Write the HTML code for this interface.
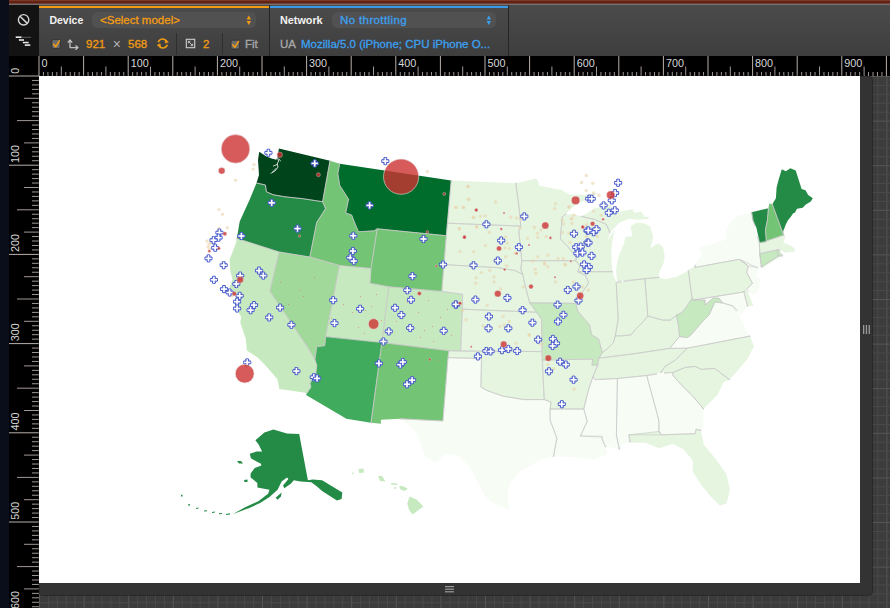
<!DOCTYPE html>
<html><head><meta charset="utf-8">
<style>
html,body{margin:0;padding:0;width:890px;height:608px;overflow:hidden;background:#3c3c3c;}
body{position:relative;font-family:"Liberation Sans",sans-serif;}
.abs{position:absolute;}
#topstrip{left:0;top:0;width:890px;height:5px;background:linear-gradient(#8a5040 0px,#6a2414 1px,#5e1e10 3px,#7a6a66 4px,#777 5px);}
#navy{left:0;top:0;width:9px;height:608px;background:#0a0e1a;}
#tbleft{left:9px;top:5px;width:30px;height:51px;background:#131313;}
#toolbar{left:39px;top:5px;width:851px;height:51px;background:linear-gradient(#4b4b4b,#3e3e3e);}
.sec{position:absolute;top:0;height:51px;border-right:1.5px solid #262626;}
.bar{position:absolute;left:0;right:0;top:1px;height:2px;}
.lbl{position:absolute;font-size:10.8px;line-height:14px;font-weight:bold;color:#f2f2f2;}
.sel{position:absolute;height:16px;border-radius:5px;background:#515151;}
.orange{color:#f39c12;}
.blue{color:#3ca0f0;}
.t12{position:absolute;font-size:11.5px;line-height:14px;-webkit-text-stroke:0.3px currentColor;}
.sep{position:absolute;width:1px;background:#2e2e2e;}
.cb{position:absolute;width:8px;height:8px;border:1px solid #2a2a2a;border-radius:2px;background:#6a6a6a;}
</style></head><body>
<div id="navy" class="abs"></div>
<div id="topstrip" class="abs" style="left:9px;width:881px"></div>
<div id="tbleft" class="abs"></div>
<div id="toolbar" class="abs">
  <div class="sec" style="left:0;width:230px"><div class="bar" style="background:#f39c12"></div></div>
  <div class="sec" style="left:231px;width:238px"><div class="bar" style="background:#3a9ae8"></div></div>
</div>
<svg class="abs" style="left:0;top:0;z-index:5" width="890" height="60">
  <circle cx="23.6" cy="19.8" r="5.2" fill="none" stroke="#d6d6d6" stroke-width="1.4"/>
  <line x1="20" y1="16.2" x2="27.2" y2="23.4" stroke="#d6d6d6" stroke-width="1.5"/>
  <rect x="15.7" y="36.4" width="5.9" height="1.6" fill="#e8e8e8"/><rect x="21.6" y="36.8" width="9.5" height="1" fill="#5a5a5a"/>
  <rect x="18.9" y="39.2" width="5.1" height="1.6" fill="#e8e8e8"/>
  <rect x="22.8" y="41.8" width="5.9" height="1.5" fill="#e8e8e8"/>
  <rect x="24.8" y="44.3" width="5.5" height="1.6" fill="#e8e8e8"/>
  <!-- select arrows -->
  <path d="M246.6,19.5 L248.8,15.6 L251,19.5Z M246.6,20.9 L248.8,25 L251,20.9Z" fill="#f39c12"/>
  <path d="M486.6,19.5 L488.8,15.6 L491,19.5Z M486.6,20.9 L488.8,25 L491,20.9Z" fill="#3ca0f0"/>
  <!-- checkboxes -->
  <rect x="51.8" y="39.6" width="8.4" height="9" rx="1.6" fill="#6b6b6b" stroke="#2c2c2c" stroke-width="0.8"/>
  <path d="M53.6,44.2 L55.6,46.8 L59.4,40.8" fill="none" stroke="#f39c12" stroke-width="1.5" stroke-linecap="round" stroke-linejoin="round"/>
  <rect x="231" y="40.2" width="8.4" height="8.8" rx="1.6" fill="#6b6b6b" stroke="#2c2c2c" stroke-width="0.8"/>
  <path d="M232.8,44.8 L234.8,47.4 L238.6,41.4" fill="none" stroke="#f39c12" stroke-width="1.5" stroke-linecap="round" stroke-linejoin="round"/>
  <!-- resize arrows icon -->
  <path d="M70,48 V40.5 M67.8,42.6 L70,40 L72.2,42.6 M70,47.6 H77.6 M75.5,45.4 L78,47.6 L75.5,49.8" fill="none" stroke="#bdbdbd" stroke-width="1.3" stroke-linejoin="round"/>
  <!-- rotate icon -->
  <path d="M158.3,42.2 A4.6,4.6 0 0 1 166.6,41.2 M167.3,44.8 A4.6,4.6 0 0 1 159,45.8" fill="none" stroke="#f39c12" stroke-width="1.6"/>
  <path d="M165,39.6 L168.4,41.9 L165.4,43.2Z M160.6,47.4 L157.2,45.1 L160.2,43.8Z" fill="#f39c12" stroke="#f39c12" stroke-width="0.6"/>
  <!-- zoom icon -->
  <rect x="186.3" y="39.3" width="8.4" height="8.4" fill="none" stroke="#cfcfcf" stroke-width="1.1"/>
  <path d="M188.6,41.6 L191,44 M188.3,43.4 V41.3 H190.4 M192.4,45.4 L190,43 M192.7,43.6 V45.7 H190.6" fill="none" stroke="#cfcfcf" stroke-width="0.9"/>
</svg>
<div class="sel" style="left:92.2px;top:12px;width:164.2px"></div>
<div class="sel" style="left:332.4px;top:12px;width:164px"></div>
<div id="tDevice" class="lbl" style="left:49.4px;top:13px;font-size:10.5px">Device</div>
<div id="tSel" class="t12 orange" style="left:100px;top:13px">&lt;Select model&gt;</div>
<div id="tNet" class="lbl" style="left:280px;top:13px">Network</div>
<div id="tNo" class="t12 blue" style="left:340px;top:13px;letter-spacing:0.38px">No throttling</div>
<div id="t921" class="t12 orange" style="left:86px;top:37px">921</div>
<div id="tX" class="t12" style="left:112.8px;top:36.5px;color:#b0b0b0;font-size:14px;-webkit-text-stroke:0">&#215;</div>
<div id="t568" class="t12 orange" style="left:128px;top:37px">568</div>
<div class="sep" style="left:176px;top:33px;height:22px"></div>
<div id="t2" class="t12 orange" style="left:203px;top:37px">2</div>
<div class="sep" style="left:222px;top:33px;height:22px"></div>
<div id="tFit" class="t12" style="left:245px;top:37px;color:#aaa">Fit</div>
<div id="tUA" class="t12" style="left:280px;top:37px;color:#aaa">UA</div>
<div id="tMoz" class="t12 blue" style="left:301px;top:37px">Mozilla/5.0 (iPhone; CPU iPhone O...</div>
<svg class="abs" style="left:0;top:0" width="890" height="608">
  <rect x="9" y="56" width="881" height="20" fill="#000"/>
  <rect x="9" y="56" width="30" height="552" fill="#000"/>
  <line x1="39.00" y1="56" x2="39.00" y2="76" stroke="#b8b0ac" stroke-width="1"/>
<text x="41.50" y="67" fill="#d8d8d8" font-size="10.8" font-family="Liberation Sans">0</text>
<line x1="43.46" y1="72" x2="43.46" y2="76" stroke="#a09894" stroke-width="1"/>
<line x1="47.92" y1="72" x2="47.92" y2="76" stroke="#a09894" stroke-width="1"/>
<line x1="52.38" y1="72" x2="52.38" y2="76" stroke="#a09894" stroke-width="1"/>
<line x1="56.84" y1="72" x2="56.84" y2="76" stroke="#a09894" stroke-width="1"/>
<line x1="61.30" y1="66.5" x2="61.30" y2="76" stroke="#a09894" stroke-width="1"/>
<line x1="65.76" y1="72" x2="65.76" y2="76" stroke="#a09894" stroke-width="1"/>
<line x1="70.22" y1="72" x2="70.22" y2="76" stroke="#a09894" stroke-width="1"/>
<line x1="74.68" y1="72" x2="74.68" y2="76" stroke="#a09894" stroke-width="1"/>
<line x1="79.14" y1="72" x2="79.14" y2="76" stroke="#a09894" stroke-width="1"/>
<line x1="83.60" y1="56" x2="83.60" y2="76" stroke="#b8b0ac" stroke-width="1"/>
<line x1="88.06" y1="72" x2="88.06" y2="76" stroke="#a09894" stroke-width="1"/>
<line x1="92.52" y1="72" x2="92.52" y2="76" stroke="#a09894" stroke-width="1"/>
<line x1="96.98" y1="72" x2="96.98" y2="76" stroke="#a09894" stroke-width="1"/>
<line x1="101.44" y1="72" x2="101.44" y2="76" stroke="#a09894" stroke-width="1"/>
<line x1="105.90" y1="66.5" x2="105.90" y2="76" stroke="#a09894" stroke-width="1"/>
<line x1="110.36" y1="72" x2="110.36" y2="76" stroke="#a09894" stroke-width="1"/>
<line x1="114.82" y1="72" x2="114.82" y2="76" stroke="#a09894" stroke-width="1"/>
<line x1="119.28" y1="72" x2="119.28" y2="76" stroke="#a09894" stroke-width="1"/>
<line x1="123.74" y1="72" x2="123.74" y2="76" stroke="#a09894" stroke-width="1"/>
<line x1="128.20" y1="56" x2="128.20" y2="76" stroke="#b8b0ac" stroke-width="1"/>
<text x="130.70" y="67" fill="#d8d8d8" font-size="10.8" font-family="Liberation Sans">100</text>
<line x1="132.66" y1="72" x2="132.66" y2="76" stroke="#a09894" stroke-width="1"/>
<line x1="137.12" y1="72" x2="137.12" y2="76" stroke="#a09894" stroke-width="1"/>
<line x1="141.58" y1="72" x2="141.58" y2="76" stroke="#a09894" stroke-width="1"/>
<line x1="146.04" y1="72" x2="146.04" y2="76" stroke="#a09894" stroke-width="1"/>
<line x1="150.50" y1="66.5" x2="150.50" y2="76" stroke="#a09894" stroke-width="1"/>
<line x1="154.96" y1="72" x2="154.96" y2="76" stroke="#a09894" stroke-width="1"/>
<line x1="159.42" y1="72" x2="159.42" y2="76" stroke="#a09894" stroke-width="1"/>
<line x1="163.88" y1="72" x2="163.88" y2="76" stroke="#a09894" stroke-width="1"/>
<line x1="168.34" y1="72" x2="168.34" y2="76" stroke="#a09894" stroke-width="1"/>
<line x1="172.80" y1="56" x2="172.80" y2="76" stroke="#b8b0ac" stroke-width="1"/>
<line x1="177.26" y1="72" x2="177.26" y2="76" stroke="#a09894" stroke-width="1"/>
<line x1="181.72" y1="72" x2="181.72" y2="76" stroke="#a09894" stroke-width="1"/>
<line x1="186.18" y1="72" x2="186.18" y2="76" stroke="#a09894" stroke-width="1"/>
<line x1="190.64" y1="72" x2="190.64" y2="76" stroke="#a09894" stroke-width="1"/>
<line x1="195.10" y1="66.5" x2="195.10" y2="76" stroke="#a09894" stroke-width="1"/>
<line x1="199.56" y1="72" x2="199.56" y2="76" stroke="#a09894" stroke-width="1"/>
<line x1="204.02" y1="72" x2="204.02" y2="76" stroke="#a09894" stroke-width="1"/>
<line x1="208.48" y1="72" x2="208.48" y2="76" stroke="#a09894" stroke-width="1"/>
<line x1="212.94" y1="72" x2="212.94" y2="76" stroke="#a09894" stroke-width="1"/>
<line x1="217.40" y1="56" x2="217.40" y2="76" stroke="#b8b0ac" stroke-width="1"/>
<text x="219.90" y="67" fill="#d8d8d8" font-size="10.8" font-family="Liberation Sans">200</text>
<line x1="221.86" y1="72" x2="221.86" y2="76" stroke="#a09894" stroke-width="1"/>
<line x1="226.32" y1="72" x2="226.32" y2="76" stroke="#a09894" stroke-width="1"/>
<line x1="230.78" y1="72" x2="230.78" y2="76" stroke="#a09894" stroke-width="1"/>
<line x1="235.24" y1="72" x2="235.24" y2="76" stroke="#a09894" stroke-width="1"/>
<line x1="239.70" y1="66.5" x2="239.70" y2="76" stroke="#a09894" stroke-width="1"/>
<line x1="244.16" y1="72" x2="244.16" y2="76" stroke="#a09894" stroke-width="1"/>
<line x1="248.62" y1="72" x2="248.62" y2="76" stroke="#a09894" stroke-width="1"/>
<line x1="253.08" y1="72" x2="253.08" y2="76" stroke="#a09894" stroke-width="1"/>
<line x1="257.54" y1="72" x2="257.54" y2="76" stroke="#a09894" stroke-width="1"/>
<line x1="262.00" y1="56" x2="262.00" y2="76" stroke="#b8b0ac" stroke-width="1"/>
<line x1="266.46" y1="72" x2="266.46" y2="76" stroke="#a09894" stroke-width="1"/>
<line x1="270.92" y1="72" x2="270.92" y2="76" stroke="#a09894" stroke-width="1"/>
<line x1="275.38" y1="72" x2="275.38" y2="76" stroke="#a09894" stroke-width="1"/>
<line x1="279.84" y1="72" x2="279.84" y2="76" stroke="#a09894" stroke-width="1"/>
<line x1="284.30" y1="66.5" x2="284.30" y2="76" stroke="#a09894" stroke-width="1"/>
<line x1="288.76" y1="72" x2="288.76" y2="76" stroke="#a09894" stroke-width="1"/>
<line x1="293.22" y1="72" x2="293.22" y2="76" stroke="#a09894" stroke-width="1"/>
<line x1="297.68" y1="72" x2="297.68" y2="76" stroke="#a09894" stroke-width="1"/>
<line x1="302.14" y1="72" x2="302.14" y2="76" stroke="#a09894" stroke-width="1"/>
<line x1="306.60" y1="56" x2="306.60" y2="76" stroke="#b8b0ac" stroke-width="1"/>
<text x="309.10" y="67" fill="#d8d8d8" font-size="10.8" font-family="Liberation Sans">300</text>
<line x1="311.06" y1="72" x2="311.06" y2="76" stroke="#a09894" stroke-width="1"/>
<line x1="315.52" y1="72" x2="315.52" y2="76" stroke="#a09894" stroke-width="1"/>
<line x1="319.98" y1="72" x2="319.98" y2="76" stroke="#a09894" stroke-width="1"/>
<line x1="324.44" y1="72" x2="324.44" y2="76" stroke="#a09894" stroke-width="1"/>
<line x1="328.90" y1="66.5" x2="328.90" y2="76" stroke="#a09894" stroke-width="1"/>
<line x1="333.36" y1="72" x2="333.36" y2="76" stroke="#a09894" stroke-width="1"/>
<line x1="337.82" y1="72" x2="337.82" y2="76" stroke="#a09894" stroke-width="1"/>
<line x1="342.28" y1="72" x2="342.28" y2="76" stroke="#a09894" stroke-width="1"/>
<line x1="346.74" y1="72" x2="346.74" y2="76" stroke="#a09894" stroke-width="1"/>
<line x1="351.20" y1="56" x2="351.20" y2="76" stroke="#b8b0ac" stroke-width="1"/>
<line x1="355.66" y1="72" x2="355.66" y2="76" stroke="#a09894" stroke-width="1"/>
<line x1="360.12" y1="72" x2="360.12" y2="76" stroke="#a09894" stroke-width="1"/>
<line x1="364.58" y1="72" x2="364.58" y2="76" stroke="#a09894" stroke-width="1"/>
<line x1="369.04" y1="72" x2="369.04" y2="76" stroke="#a09894" stroke-width="1"/>
<line x1="373.50" y1="66.5" x2="373.50" y2="76" stroke="#a09894" stroke-width="1"/>
<line x1="377.96" y1="72" x2="377.96" y2="76" stroke="#a09894" stroke-width="1"/>
<line x1="382.42" y1="72" x2="382.42" y2="76" stroke="#a09894" stroke-width="1"/>
<line x1="386.88" y1="72" x2="386.88" y2="76" stroke="#a09894" stroke-width="1"/>
<line x1="391.34" y1="72" x2="391.34" y2="76" stroke="#a09894" stroke-width="1"/>
<line x1="395.80" y1="56" x2="395.80" y2="76" stroke="#b8b0ac" stroke-width="1"/>
<text x="398.30" y="67" fill="#d8d8d8" font-size="10.8" font-family="Liberation Sans">400</text>
<line x1="400.26" y1="72" x2="400.26" y2="76" stroke="#a09894" stroke-width="1"/>
<line x1="404.72" y1="72" x2="404.72" y2="76" stroke="#a09894" stroke-width="1"/>
<line x1="409.18" y1="72" x2="409.18" y2="76" stroke="#a09894" stroke-width="1"/>
<line x1="413.64" y1="72" x2="413.64" y2="76" stroke="#a09894" stroke-width="1"/>
<line x1="418.10" y1="66.5" x2="418.10" y2="76" stroke="#a09894" stroke-width="1"/>
<line x1="422.56" y1="72" x2="422.56" y2="76" stroke="#a09894" stroke-width="1"/>
<line x1="427.02" y1="72" x2="427.02" y2="76" stroke="#a09894" stroke-width="1"/>
<line x1="431.48" y1="72" x2="431.48" y2="76" stroke="#a09894" stroke-width="1"/>
<line x1="435.94" y1="72" x2="435.94" y2="76" stroke="#a09894" stroke-width="1"/>
<line x1="440.40" y1="56" x2="440.40" y2="76" stroke="#b8b0ac" stroke-width="1"/>
<line x1="444.86" y1="72" x2="444.86" y2="76" stroke="#a09894" stroke-width="1"/>
<line x1="449.32" y1="72" x2="449.32" y2="76" stroke="#a09894" stroke-width="1"/>
<line x1="453.78" y1="72" x2="453.78" y2="76" stroke="#a09894" stroke-width="1"/>
<line x1="458.24" y1="72" x2="458.24" y2="76" stroke="#a09894" stroke-width="1"/>
<line x1="462.70" y1="66.5" x2="462.70" y2="76" stroke="#a09894" stroke-width="1"/>
<line x1="467.16" y1="72" x2="467.16" y2="76" stroke="#a09894" stroke-width="1"/>
<line x1="471.62" y1="72" x2="471.62" y2="76" stroke="#a09894" stroke-width="1"/>
<line x1="476.08" y1="72" x2="476.08" y2="76" stroke="#a09894" stroke-width="1"/>
<line x1="480.54" y1="72" x2="480.54" y2="76" stroke="#a09894" stroke-width="1"/>
<line x1="485.00" y1="56" x2="485.00" y2="76" stroke="#b8b0ac" stroke-width="1"/>
<text x="487.50" y="67" fill="#d8d8d8" font-size="10.8" font-family="Liberation Sans">500</text>
<line x1="489.46" y1="72" x2="489.46" y2="76" stroke="#a09894" stroke-width="1"/>
<line x1="493.92" y1="72" x2="493.92" y2="76" stroke="#a09894" stroke-width="1"/>
<line x1="498.38" y1="72" x2="498.38" y2="76" stroke="#a09894" stroke-width="1"/>
<line x1="502.84" y1="72" x2="502.84" y2="76" stroke="#a09894" stroke-width="1"/>
<line x1="507.30" y1="66.5" x2="507.30" y2="76" stroke="#a09894" stroke-width="1"/>
<line x1="511.76" y1="72" x2="511.76" y2="76" stroke="#a09894" stroke-width="1"/>
<line x1="516.22" y1="72" x2="516.22" y2="76" stroke="#a09894" stroke-width="1"/>
<line x1="520.68" y1="72" x2="520.68" y2="76" stroke="#a09894" stroke-width="1"/>
<line x1="525.14" y1="72" x2="525.14" y2="76" stroke="#a09894" stroke-width="1"/>
<line x1="529.60" y1="56" x2="529.60" y2="76" stroke="#b8b0ac" stroke-width="1"/>
<line x1="534.06" y1="72" x2="534.06" y2="76" stroke="#a09894" stroke-width="1"/>
<line x1="538.52" y1="72" x2="538.52" y2="76" stroke="#a09894" stroke-width="1"/>
<line x1="542.98" y1="72" x2="542.98" y2="76" stroke="#a09894" stroke-width="1"/>
<line x1="547.44" y1="72" x2="547.44" y2="76" stroke="#a09894" stroke-width="1"/>
<line x1="551.90" y1="66.5" x2="551.90" y2="76" stroke="#a09894" stroke-width="1"/>
<line x1="556.36" y1="72" x2="556.36" y2="76" stroke="#a09894" stroke-width="1"/>
<line x1="560.82" y1="72" x2="560.82" y2="76" stroke="#a09894" stroke-width="1"/>
<line x1="565.28" y1="72" x2="565.28" y2="76" stroke="#a09894" stroke-width="1"/>
<line x1="569.74" y1="72" x2="569.74" y2="76" stroke="#a09894" stroke-width="1"/>
<line x1="574.20" y1="56" x2="574.20" y2="76" stroke="#b8b0ac" stroke-width="1"/>
<text x="576.70" y="67" fill="#d8d8d8" font-size="10.8" font-family="Liberation Sans">600</text>
<line x1="578.66" y1="72" x2="578.66" y2="76" stroke="#a09894" stroke-width="1"/>
<line x1="583.12" y1="72" x2="583.12" y2="76" stroke="#a09894" stroke-width="1"/>
<line x1="587.58" y1="72" x2="587.58" y2="76" stroke="#a09894" stroke-width="1"/>
<line x1="592.04" y1="72" x2="592.04" y2="76" stroke="#a09894" stroke-width="1"/>
<line x1="596.50" y1="66.5" x2="596.50" y2="76" stroke="#a09894" stroke-width="1"/>
<line x1="600.96" y1="72" x2="600.96" y2="76" stroke="#a09894" stroke-width="1"/>
<line x1="605.42" y1="72" x2="605.42" y2="76" stroke="#a09894" stroke-width="1"/>
<line x1="609.88" y1="72" x2="609.88" y2="76" stroke="#a09894" stroke-width="1"/>
<line x1="614.34" y1="72" x2="614.34" y2="76" stroke="#a09894" stroke-width="1"/>
<line x1="618.80" y1="56" x2="618.80" y2="76" stroke="#b8b0ac" stroke-width="1"/>
<line x1="623.26" y1="72" x2="623.26" y2="76" stroke="#a09894" stroke-width="1"/>
<line x1="627.72" y1="72" x2="627.72" y2="76" stroke="#a09894" stroke-width="1"/>
<line x1="632.18" y1="72" x2="632.18" y2="76" stroke="#a09894" stroke-width="1"/>
<line x1="636.64" y1="72" x2="636.64" y2="76" stroke="#a09894" stroke-width="1"/>
<line x1="641.10" y1="66.5" x2="641.10" y2="76" stroke="#a09894" stroke-width="1"/>
<line x1="645.56" y1="72" x2="645.56" y2="76" stroke="#a09894" stroke-width="1"/>
<line x1="650.02" y1="72" x2="650.02" y2="76" stroke="#a09894" stroke-width="1"/>
<line x1="654.48" y1="72" x2="654.48" y2="76" stroke="#a09894" stroke-width="1"/>
<line x1="658.94" y1="72" x2="658.94" y2="76" stroke="#a09894" stroke-width="1"/>
<line x1="663.40" y1="56" x2="663.40" y2="76" stroke="#b8b0ac" stroke-width="1"/>
<text x="665.90" y="67" fill="#d8d8d8" font-size="10.8" font-family="Liberation Sans">700</text>
<line x1="667.86" y1="72" x2="667.86" y2="76" stroke="#a09894" stroke-width="1"/>
<line x1="672.32" y1="72" x2="672.32" y2="76" stroke="#a09894" stroke-width="1"/>
<line x1="676.78" y1="72" x2="676.78" y2="76" stroke="#a09894" stroke-width="1"/>
<line x1="681.24" y1="72" x2="681.24" y2="76" stroke="#a09894" stroke-width="1"/>
<line x1="685.70" y1="66.5" x2="685.70" y2="76" stroke="#a09894" stroke-width="1"/>
<line x1="690.16" y1="72" x2="690.16" y2="76" stroke="#a09894" stroke-width="1"/>
<line x1="694.62" y1="72" x2="694.62" y2="76" stroke="#a09894" stroke-width="1"/>
<line x1="699.08" y1="72" x2="699.08" y2="76" stroke="#a09894" stroke-width="1"/>
<line x1="703.54" y1="72" x2="703.54" y2="76" stroke="#a09894" stroke-width="1"/>
<line x1="708.00" y1="56" x2="708.00" y2="76" stroke="#b8b0ac" stroke-width="1"/>
<line x1="712.46" y1="72" x2="712.46" y2="76" stroke="#a09894" stroke-width="1"/>
<line x1="716.92" y1="72" x2="716.92" y2="76" stroke="#a09894" stroke-width="1"/>
<line x1="721.38" y1="72" x2="721.38" y2="76" stroke="#a09894" stroke-width="1"/>
<line x1="725.84" y1="72" x2="725.84" y2="76" stroke="#a09894" stroke-width="1"/>
<line x1="730.30" y1="66.5" x2="730.30" y2="76" stroke="#a09894" stroke-width="1"/>
<line x1="734.76" y1="72" x2="734.76" y2="76" stroke="#a09894" stroke-width="1"/>
<line x1="739.22" y1="72" x2="739.22" y2="76" stroke="#a09894" stroke-width="1"/>
<line x1="743.68" y1="72" x2="743.68" y2="76" stroke="#a09894" stroke-width="1"/>
<line x1="748.14" y1="72" x2="748.14" y2="76" stroke="#a09894" stroke-width="1"/>
<line x1="752.60" y1="56" x2="752.60" y2="76" stroke="#b8b0ac" stroke-width="1"/>
<text x="755.10" y="67" fill="#d8d8d8" font-size="10.8" font-family="Liberation Sans">800</text>
<line x1="757.06" y1="72" x2="757.06" y2="76" stroke="#a09894" stroke-width="1"/>
<line x1="761.52" y1="72" x2="761.52" y2="76" stroke="#a09894" stroke-width="1"/>
<line x1="765.98" y1="72" x2="765.98" y2="76" stroke="#a09894" stroke-width="1"/>
<line x1="770.44" y1="72" x2="770.44" y2="76" stroke="#a09894" stroke-width="1"/>
<line x1="774.90" y1="66.5" x2="774.90" y2="76" stroke="#a09894" stroke-width="1"/>
<line x1="779.36" y1="72" x2="779.36" y2="76" stroke="#a09894" stroke-width="1"/>
<line x1="783.82" y1="72" x2="783.82" y2="76" stroke="#a09894" stroke-width="1"/>
<line x1="788.28" y1="72" x2="788.28" y2="76" stroke="#a09894" stroke-width="1"/>
<line x1="792.74" y1="72" x2="792.74" y2="76" stroke="#a09894" stroke-width="1"/>
<line x1="797.20" y1="56" x2="797.20" y2="76" stroke="#b8b0ac" stroke-width="1"/>
<line x1="801.66" y1="72" x2="801.66" y2="76" stroke="#a09894" stroke-width="1"/>
<line x1="806.12" y1="72" x2="806.12" y2="76" stroke="#a09894" stroke-width="1"/>
<line x1="810.58" y1="72" x2="810.58" y2="76" stroke="#a09894" stroke-width="1"/>
<line x1="815.04" y1="72" x2="815.04" y2="76" stroke="#a09894" stroke-width="1"/>
<line x1="819.50" y1="66.5" x2="819.50" y2="76" stroke="#a09894" stroke-width="1"/>
<line x1="823.96" y1="72" x2="823.96" y2="76" stroke="#a09894" stroke-width="1"/>
<line x1="828.42" y1="72" x2="828.42" y2="76" stroke="#a09894" stroke-width="1"/>
<line x1="832.88" y1="72" x2="832.88" y2="76" stroke="#a09894" stroke-width="1"/>
<line x1="837.34" y1="72" x2="837.34" y2="76" stroke="#a09894" stroke-width="1"/>
<line x1="841.80" y1="56" x2="841.80" y2="76" stroke="#b8b0ac" stroke-width="1"/>
<text x="844.30" y="67" fill="#d8d8d8" font-size="10.8" font-family="Liberation Sans">900</text>
<line x1="846.26" y1="72" x2="846.26" y2="76" stroke="#a09894" stroke-width="1"/>
<line x1="850.72" y1="72" x2="850.72" y2="76" stroke="#a09894" stroke-width="1"/>
<line x1="855.18" y1="72" x2="855.18" y2="76" stroke="#a09894" stroke-width="1"/>
<line x1="859.64" y1="72" x2="859.64" y2="76" stroke="#a09894" stroke-width="1"/>
<line x1="864.10" y1="66.5" x2="864.10" y2="76" stroke="#a09894" stroke-width="1"/>
<line x1="868.56" y1="72" x2="868.56" y2="76" stroke="#a09894" stroke-width="1"/>
<line x1="873.02" y1="72" x2="873.02" y2="76" stroke="#a09894" stroke-width="1"/>
<line x1="877.48" y1="72" x2="877.48" y2="76" stroke="#a09894" stroke-width="1"/>
<line x1="881.94" y1="72" x2="881.94" y2="76" stroke="#a09894" stroke-width="1"/>
<line x1="886.40" y1="56" x2="886.40" y2="76" stroke="#b8b0ac" stroke-width="1"/>
  <line x1="9" y1="76.00" x2="39" y2="76.00" stroke="#b8b0ac" stroke-width="1"/>
<text transform="translate(19.4,73.70) rotate(-90)" fill="#d8d8d8" font-size="10.8" font-family="Liberation Sans">0</text>
<line x1="32" y1="80.46" x2="39" y2="80.46" stroke="#a09894" stroke-width="1"/>
<line x1="32" y1="84.92" x2="39" y2="84.92" stroke="#a09894" stroke-width="1"/>
<line x1="32" y1="89.38" x2="39" y2="89.38" stroke="#a09894" stroke-width="1"/>
<line x1="32" y1="93.84" x2="39" y2="93.84" stroke="#a09894" stroke-width="1"/>
<line x1="24" y1="98.30" x2="39" y2="98.30" stroke="#a09894" stroke-width="1"/>
<line x1="32" y1="102.76" x2="39" y2="102.76" stroke="#a09894" stroke-width="1"/>
<line x1="32" y1="107.22" x2="39" y2="107.22" stroke="#a09894" stroke-width="1"/>
<line x1="32" y1="111.68" x2="39" y2="111.68" stroke="#a09894" stroke-width="1"/>
<line x1="32" y1="116.14" x2="39" y2="116.14" stroke="#a09894" stroke-width="1"/>
<line x1="17" y1="120.60" x2="39" y2="120.60" stroke="#a09894" stroke-width="1"/>
<line x1="32" y1="125.06" x2="39" y2="125.06" stroke="#a09894" stroke-width="1"/>
<line x1="32" y1="129.52" x2="39" y2="129.52" stroke="#a09894" stroke-width="1"/>
<line x1="32" y1="133.98" x2="39" y2="133.98" stroke="#a09894" stroke-width="1"/>
<line x1="32" y1="138.44" x2="39" y2="138.44" stroke="#a09894" stroke-width="1"/>
<line x1="24" y1="142.90" x2="39" y2="142.90" stroke="#a09894" stroke-width="1"/>
<line x1="32" y1="147.36" x2="39" y2="147.36" stroke="#a09894" stroke-width="1"/>
<line x1="32" y1="151.82" x2="39" y2="151.82" stroke="#a09894" stroke-width="1"/>
<line x1="32" y1="156.28" x2="39" y2="156.28" stroke="#a09894" stroke-width="1"/>
<line x1="32" y1="160.74" x2="39" y2="160.74" stroke="#a09894" stroke-width="1"/>
<line x1="9" y1="165.20" x2="39" y2="165.20" stroke="#b8b0ac" stroke-width="1"/>
<text transform="translate(19.4,162.90) rotate(-90)" fill="#d8d8d8" font-size="10.8" font-family="Liberation Sans">100</text>
<line x1="32" y1="169.66" x2="39" y2="169.66" stroke="#a09894" stroke-width="1"/>
<line x1="32" y1="174.12" x2="39" y2="174.12" stroke="#a09894" stroke-width="1"/>
<line x1="32" y1="178.58" x2="39" y2="178.58" stroke="#a09894" stroke-width="1"/>
<line x1="32" y1="183.04" x2="39" y2="183.04" stroke="#a09894" stroke-width="1"/>
<line x1="24" y1="187.50" x2="39" y2="187.50" stroke="#a09894" stroke-width="1"/>
<line x1="32" y1="191.96" x2="39" y2="191.96" stroke="#a09894" stroke-width="1"/>
<line x1="32" y1="196.42" x2="39" y2="196.42" stroke="#a09894" stroke-width="1"/>
<line x1="32" y1="200.88" x2="39" y2="200.88" stroke="#a09894" stroke-width="1"/>
<line x1="32" y1="205.34" x2="39" y2="205.34" stroke="#a09894" stroke-width="1"/>
<line x1="17" y1="209.80" x2="39" y2="209.80" stroke="#a09894" stroke-width="1"/>
<line x1="32" y1="214.26" x2="39" y2="214.26" stroke="#a09894" stroke-width="1"/>
<line x1="32" y1="218.72" x2="39" y2="218.72" stroke="#a09894" stroke-width="1"/>
<line x1="32" y1="223.18" x2="39" y2="223.18" stroke="#a09894" stroke-width="1"/>
<line x1="32" y1="227.64" x2="39" y2="227.64" stroke="#a09894" stroke-width="1"/>
<line x1="24" y1="232.10" x2="39" y2="232.10" stroke="#a09894" stroke-width="1"/>
<line x1="32" y1="236.56" x2="39" y2="236.56" stroke="#a09894" stroke-width="1"/>
<line x1="32" y1="241.02" x2="39" y2="241.02" stroke="#a09894" stroke-width="1"/>
<line x1="32" y1="245.48" x2="39" y2="245.48" stroke="#a09894" stroke-width="1"/>
<line x1="32" y1="249.94" x2="39" y2="249.94" stroke="#a09894" stroke-width="1"/>
<line x1="9" y1="254.40" x2="39" y2="254.40" stroke="#b8b0ac" stroke-width="1"/>
<text transform="translate(19.4,252.10) rotate(-90)" fill="#d8d8d8" font-size="10.8" font-family="Liberation Sans">200</text>
<line x1="32" y1="258.86" x2="39" y2="258.86" stroke="#a09894" stroke-width="1"/>
<line x1="32" y1="263.32" x2="39" y2="263.32" stroke="#a09894" stroke-width="1"/>
<line x1="32" y1="267.78" x2="39" y2="267.78" stroke="#a09894" stroke-width="1"/>
<line x1="32" y1="272.24" x2="39" y2="272.24" stroke="#a09894" stroke-width="1"/>
<line x1="24" y1="276.70" x2="39" y2="276.70" stroke="#a09894" stroke-width="1"/>
<line x1="32" y1="281.16" x2="39" y2="281.16" stroke="#a09894" stroke-width="1"/>
<line x1="32" y1="285.62" x2="39" y2="285.62" stroke="#a09894" stroke-width="1"/>
<line x1="32" y1="290.08" x2="39" y2="290.08" stroke="#a09894" stroke-width="1"/>
<line x1="32" y1="294.54" x2="39" y2="294.54" stroke="#a09894" stroke-width="1"/>
<line x1="17" y1="299.00" x2="39" y2="299.00" stroke="#a09894" stroke-width="1"/>
<line x1="32" y1="303.46" x2="39" y2="303.46" stroke="#a09894" stroke-width="1"/>
<line x1="32" y1="307.92" x2="39" y2="307.92" stroke="#a09894" stroke-width="1"/>
<line x1="32" y1="312.38" x2="39" y2="312.38" stroke="#a09894" stroke-width="1"/>
<line x1="32" y1="316.84" x2="39" y2="316.84" stroke="#a09894" stroke-width="1"/>
<line x1="24" y1="321.30" x2="39" y2="321.30" stroke="#a09894" stroke-width="1"/>
<line x1="32" y1="325.76" x2="39" y2="325.76" stroke="#a09894" stroke-width="1"/>
<line x1="32" y1="330.22" x2="39" y2="330.22" stroke="#a09894" stroke-width="1"/>
<line x1="32" y1="334.68" x2="39" y2="334.68" stroke="#a09894" stroke-width="1"/>
<line x1="32" y1="339.14" x2="39" y2="339.14" stroke="#a09894" stroke-width="1"/>
<line x1="9" y1="343.60" x2="39" y2="343.60" stroke="#b8b0ac" stroke-width="1"/>
<text transform="translate(19.4,341.30) rotate(-90)" fill="#d8d8d8" font-size="10.8" font-family="Liberation Sans">300</text>
<line x1="32" y1="348.06" x2="39" y2="348.06" stroke="#a09894" stroke-width="1"/>
<line x1="32" y1="352.52" x2="39" y2="352.52" stroke="#a09894" stroke-width="1"/>
<line x1="32" y1="356.98" x2="39" y2="356.98" stroke="#a09894" stroke-width="1"/>
<line x1="32" y1="361.44" x2="39" y2="361.44" stroke="#a09894" stroke-width="1"/>
<line x1="24" y1="365.90" x2="39" y2="365.90" stroke="#a09894" stroke-width="1"/>
<line x1="32" y1="370.36" x2="39" y2="370.36" stroke="#a09894" stroke-width="1"/>
<line x1="32" y1="374.82" x2="39" y2="374.82" stroke="#a09894" stroke-width="1"/>
<line x1="32" y1="379.28" x2="39" y2="379.28" stroke="#a09894" stroke-width="1"/>
<line x1="32" y1="383.74" x2="39" y2="383.74" stroke="#a09894" stroke-width="1"/>
<line x1="17" y1="388.20" x2="39" y2="388.20" stroke="#a09894" stroke-width="1"/>
<line x1="32" y1="392.66" x2="39" y2="392.66" stroke="#a09894" stroke-width="1"/>
<line x1="32" y1="397.12" x2="39" y2="397.12" stroke="#a09894" stroke-width="1"/>
<line x1="32" y1="401.58" x2="39" y2="401.58" stroke="#a09894" stroke-width="1"/>
<line x1="32" y1="406.04" x2="39" y2="406.04" stroke="#a09894" stroke-width="1"/>
<line x1="24" y1="410.50" x2="39" y2="410.50" stroke="#a09894" stroke-width="1"/>
<line x1="32" y1="414.96" x2="39" y2="414.96" stroke="#a09894" stroke-width="1"/>
<line x1="32" y1="419.42" x2="39" y2="419.42" stroke="#a09894" stroke-width="1"/>
<line x1="32" y1="423.88" x2="39" y2="423.88" stroke="#a09894" stroke-width="1"/>
<line x1="32" y1="428.34" x2="39" y2="428.34" stroke="#a09894" stroke-width="1"/>
<line x1="9" y1="432.80" x2="39" y2="432.80" stroke="#b8b0ac" stroke-width="1"/>
<text transform="translate(19.4,430.50) rotate(-90)" fill="#d8d8d8" font-size="10.8" font-family="Liberation Sans">400</text>
<line x1="32" y1="437.26" x2="39" y2="437.26" stroke="#a09894" stroke-width="1"/>
<line x1="32" y1="441.72" x2="39" y2="441.72" stroke="#a09894" stroke-width="1"/>
<line x1="32" y1="446.18" x2="39" y2="446.18" stroke="#a09894" stroke-width="1"/>
<line x1="32" y1="450.64" x2="39" y2="450.64" stroke="#a09894" stroke-width="1"/>
<line x1="24" y1="455.10" x2="39" y2="455.10" stroke="#a09894" stroke-width="1"/>
<line x1="32" y1="459.56" x2="39" y2="459.56" stroke="#a09894" stroke-width="1"/>
<line x1="32" y1="464.02" x2="39" y2="464.02" stroke="#a09894" stroke-width="1"/>
<line x1="32" y1="468.48" x2="39" y2="468.48" stroke="#a09894" stroke-width="1"/>
<line x1="32" y1="472.94" x2="39" y2="472.94" stroke="#a09894" stroke-width="1"/>
<line x1="17" y1="477.40" x2="39" y2="477.40" stroke="#a09894" stroke-width="1"/>
<line x1="32" y1="481.86" x2="39" y2="481.86" stroke="#a09894" stroke-width="1"/>
<line x1="32" y1="486.32" x2="39" y2="486.32" stroke="#a09894" stroke-width="1"/>
<line x1="32" y1="490.78" x2="39" y2="490.78" stroke="#a09894" stroke-width="1"/>
<line x1="32" y1="495.24" x2="39" y2="495.24" stroke="#a09894" stroke-width="1"/>
<line x1="24" y1="499.70" x2="39" y2="499.70" stroke="#a09894" stroke-width="1"/>
<line x1="32" y1="504.16" x2="39" y2="504.16" stroke="#a09894" stroke-width="1"/>
<line x1="32" y1="508.62" x2="39" y2="508.62" stroke="#a09894" stroke-width="1"/>
<line x1="32" y1="513.08" x2="39" y2="513.08" stroke="#a09894" stroke-width="1"/>
<line x1="32" y1="517.54" x2="39" y2="517.54" stroke="#a09894" stroke-width="1"/>
<line x1="9" y1="522.00" x2="39" y2="522.00" stroke="#b8b0ac" stroke-width="1"/>
<text transform="translate(19.4,519.70) rotate(-90)" fill="#d8d8d8" font-size="10.8" font-family="Liberation Sans">500</text>
<line x1="32" y1="526.46" x2="39" y2="526.46" stroke="#a09894" stroke-width="1"/>
<line x1="32" y1="530.92" x2="39" y2="530.92" stroke="#a09894" stroke-width="1"/>
<line x1="32" y1="535.38" x2="39" y2="535.38" stroke="#a09894" stroke-width="1"/>
<line x1="32" y1="539.84" x2="39" y2="539.84" stroke="#a09894" stroke-width="1"/>
<line x1="24" y1="544.30" x2="39" y2="544.30" stroke="#a09894" stroke-width="1"/>
<line x1="32" y1="548.76" x2="39" y2="548.76" stroke="#a09894" stroke-width="1"/>
<line x1="32" y1="553.22" x2="39" y2="553.22" stroke="#a09894" stroke-width="1"/>
<line x1="32" y1="557.68" x2="39" y2="557.68" stroke="#a09894" stroke-width="1"/>
<line x1="32" y1="562.14" x2="39" y2="562.14" stroke="#a09894" stroke-width="1"/>
<line x1="17" y1="566.60" x2="39" y2="566.60" stroke="#a09894" stroke-width="1"/>
<line x1="32" y1="571.06" x2="39" y2="571.06" stroke="#a09894" stroke-width="1"/>
<line x1="32" y1="575.52" x2="39" y2="575.52" stroke="#a09894" stroke-width="1"/>
<line x1="32" y1="579.98" x2="39" y2="579.98" stroke="#a09894" stroke-width="1"/>
<line x1="32" y1="584.44" x2="39" y2="584.44" stroke="#a09894" stroke-width="1"/>
<line x1="24" y1="588.90" x2="39" y2="588.90" stroke="#a09894" stroke-width="1"/>
<line x1="32" y1="593.36" x2="39" y2="593.36" stroke="#a09894" stroke-width="1"/>
<line x1="32" y1="597.82" x2="39" y2="597.82" stroke="#a09894" stroke-width="1"/>
<line x1="32" y1="602.28" x2="39" y2="602.28" stroke="#a09894" stroke-width="1"/>
<line x1="32" y1="606.74" x2="39" y2="606.74" stroke="#a09894" stroke-width="1"/>
<line x1="9" y1="611.20" x2="39" y2="611.20" stroke="#b8b0ac" stroke-width="1"/>
<text transform="translate(19.4,608.90) rotate(-90)" fill="#d8d8d8" font-size="10.8" font-family="Liberation Sans">600</text>
<line x1="32" y1="615.66" x2="39" y2="615.66" stroke="#a09894" stroke-width="1"/>
<line x1="32" y1="620.12" x2="39" y2="620.12" stroke="#a09894" stroke-width="1"/>
<line x1="32" y1="624.58" x2="39" y2="624.58" stroke="#a09894" stroke-width="1"/>
<line x1="32" y1="629.04" x2="39" y2="629.04" stroke="#a09894" stroke-width="1"/>
<line x1="24" y1="633.50" x2="39" y2="633.50" stroke="#a09894" stroke-width="1"/>
<line x1="32" y1="637.96" x2="39" y2="637.96" stroke="#a09894" stroke-width="1"/>
  <g><line x1="39.50" y1="76" x2="39.50" y2="608" stroke="#565656" stroke-width="1"/>
<line x1="48.42" y1="76" x2="48.42" y2="608" stroke="#4a4a4a" stroke-width="1"/>
<line x1="57.34" y1="76" x2="57.34" y2="608" stroke="#4a4a4a" stroke-width="1"/>
<line x1="66.26" y1="76" x2="66.26" y2="608" stroke="#4a4a4a" stroke-width="1"/>
<line x1="75.18" y1="76" x2="75.18" y2="608" stroke="#4a4a4a" stroke-width="1"/>
<line x1="84.10" y1="76" x2="84.10" y2="608" stroke="#565656" stroke-width="1"/>
<line x1="93.02" y1="76" x2="93.02" y2="608" stroke="#4a4a4a" stroke-width="1"/>
<line x1="101.94" y1="76" x2="101.94" y2="608" stroke="#4a4a4a" stroke-width="1"/>
<line x1="110.86" y1="76" x2="110.86" y2="608" stroke="#4a4a4a" stroke-width="1"/>
<line x1="119.78" y1="76" x2="119.78" y2="608" stroke="#4a4a4a" stroke-width="1"/>
<line x1="128.70" y1="76" x2="128.70" y2="608" stroke="#565656" stroke-width="1"/>
<line x1="137.62" y1="76" x2="137.62" y2="608" stroke="#4a4a4a" stroke-width="1"/>
<line x1="146.54" y1="76" x2="146.54" y2="608" stroke="#4a4a4a" stroke-width="1"/>
<line x1="155.46" y1="76" x2="155.46" y2="608" stroke="#4a4a4a" stroke-width="1"/>
<line x1="164.38" y1="76" x2="164.38" y2="608" stroke="#4a4a4a" stroke-width="1"/>
<line x1="173.30" y1="76" x2="173.30" y2="608" stroke="#565656" stroke-width="1"/>
<line x1="182.22" y1="76" x2="182.22" y2="608" stroke="#4a4a4a" stroke-width="1"/>
<line x1="191.14" y1="76" x2="191.14" y2="608" stroke="#4a4a4a" stroke-width="1"/>
<line x1="200.06" y1="76" x2="200.06" y2="608" stroke="#4a4a4a" stroke-width="1"/>
<line x1="208.98" y1="76" x2="208.98" y2="608" stroke="#4a4a4a" stroke-width="1"/>
<line x1="217.90" y1="76" x2="217.90" y2="608" stroke="#565656" stroke-width="1"/>
<line x1="226.82" y1="76" x2="226.82" y2="608" stroke="#4a4a4a" stroke-width="1"/>
<line x1="235.74" y1="76" x2="235.74" y2="608" stroke="#4a4a4a" stroke-width="1"/>
<line x1="244.66" y1="76" x2="244.66" y2="608" stroke="#4a4a4a" stroke-width="1"/>
<line x1="253.58" y1="76" x2="253.58" y2="608" stroke="#4a4a4a" stroke-width="1"/>
<line x1="262.50" y1="76" x2="262.50" y2="608" stroke="#565656" stroke-width="1"/>
<line x1="271.42" y1="76" x2="271.42" y2="608" stroke="#4a4a4a" stroke-width="1"/>
<line x1="280.34" y1="76" x2="280.34" y2="608" stroke="#4a4a4a" stroke-width="1"/>
<line x1="289.26" y1="76" x2="289.26" y2="608" stroke="#4a4a4a" stroke-width="1"/>
<line x1="298.18" y1="76" x2="298.18" y2="608" stroke="#4a4a4a" stroke-width="1"/>
<line x1="307.10" y1="76" x2="307.10" y2="608" stroke="#565656" stroke-width="1"/>
<line x1="316.02" y1="76" x2="316.02" y2="608" stroke="#4a4a4a" stroke-width="1"/>
<line x1="324.94" y1="76" x2="324.94" y2="608" stroke="#4a4a4a" stroke-width="1"/>
<line x1="333.86" y1="76" x2="333.86" y2="608" stroke="#4a4a4a" stroke-width="1"/>
<line x1="342.78" y1="76" x2="342.78" y2="608" stroke="#4a4a4a" stroke-width="1"/>
<line x1="351.70" y1="76" x2="351.70" y2="608" stroke="#565656" stroke-width="1"/>
<line x1="360.62" y1="76" x2="360.62" y2="608" stroke="#4a4a4a" stroke-width="1"/>
<line x1="369.54" y1="76" x2="369.54" y2="608" stroke="#4a4a4a" stroke-width="1"/>
<line x1="378.46" y1="76" x2="378.46" y2="608" stroke="#4a4a4a" stroke-width="1"/>
<line x1="387.38" y1="76" x2="387.38" y2="608" stroke="#4a4a4a" stroke-width="1"/>
<line x1="396.30" y1="76" x2="396.30" y2="608" stroke="#565656" stroke-width="1"/>
<line x1="405.22" y1="76" x2="405.22" y2="608" stroke="#4a4a4a" stroke-width="1"/>
<line x1="414.14" y1="76" x2="414.14" y2="608" stroke="#4a4a4a" stroke-width="1"/>
<line x1="423.06" y1="76" x2="423.06" y2="608" stroke="#4a4a4a" stroke-width="1"/>
<line x1="431.98" y1="76" x2="431.98" y2="608" stroke="#4a4a4a" stroke-width="1"/>
<line x1="440.90" y1="76" x2="440.90" y2="608" stroke="#565656" stroke-width="1"/>
<line x1="449.82" y1="76" x2="449.82" y2="608" stroke="#4a4a4a" stroke-width="1"/>
<line x1="458.74" y1="76" x2="458.74" y2="608" stroke="#4a4a4a" stroke-width="1"/>
<line x1="467.66" y1="76" x2="467.66" y2="608" stroke="#4a4a4a" stroke-width="1"/>
<line x1="476.58" y1="76" x2="476.58" y2="608" stroke="#4a4a4a" stroke-width="1"/>
<line x1="485.50" y1="76" x2="485.50" y2="608" stroke="#565656" stroke-width="1"/>
<line x1="494.42" y1="76" x2="494.42" y2="608" stroke="#4a4a4a" stroke-width="1"/>
<line x1="503.34" y1="76" x2="503.34" y2="608" stroke="#4a4a4a" stroke-width="1"/>
<line x1="512.26" y1="76" x2="512.26" y2="608" stroke="#4a4a4a" stroke-width="1"/>
<line x1="521.18" y1="76" x2="521.18" y2="608" stroke="#4a4a4a" stroke-width="1"/>
<line x1="530.10" y1="76" x2="530.10" y2="608" stroke="#565656" stroke-width="1"/>
<line x1="539.02" y1="76" x2="539.02" y2="608" stroke="#4a4a4a" stroke-width="1"/>
<line x1="547.94" y1="76" x2="547.94" y2="608" stroke="#4a4a4a" stroke-width="1"/>
<line x1="556.86" y1="76" x2="556.86" y2="608" stroke="#4a4a4a" stroke-width="1"/>
<line x1="565.78" y1="76" x2="565.78" y2="608" stroke="#4a4a4a" stroke-width="1"/>
<line x1="574.70" y1="76" x2="574.70" y2="608" stroke="#565656" stroke-width="1"/>
<line x1="583.62" y1="76" x2="583.62" y2="608" stroke="#4a4a4a" stroke-width="1"/>
<line x1="592.54" y1="76" x2="592.54" y2="608" stroke="#4a4a4a" stroke-width="1"/>
<line x1="601.46" y1="76" x2="601.46" y2="608" stroke="#4a4a4a" stroke-width="1"/>
<line x1="610.38" y1="76" x2="610.38" y2="608" stroke="#4a4a4a" stroke-width="1"/>
<line x1="619.30" y1="76" x2="619.30" y2="608" stroke="#565656" stroke-width="1"/>
<line x1="628.22" y1="76" x2="628.22" y2="608" stroke="#4a4a4a" stroke-width="1"/>
<line x1="637.14" y1="76" x2="637.14" y2="608" stroke="#4a4a4a" stroke-width="1"/>
<line x1="646.06" y1="76" x2="646.06" y2="608" stroke="#4a4a4a" stroke-width="1"/>
<line x1="654.98" y1="76" x2="654.98" y2="608" stroke="#4a4a4a" stroke-width="1"/>
<line x1="663.90" y1="76" x2="663.90" y2="608" stroke="#565656" stroke-width="1"/>
<line x1="672.82" y1="76" x2="672.82" y2="608" stroke="#4a4a4a" stroke-width="1"/>
<line x1="681.74" y1="76" x2="681.74" y2="608" stroke="#4a4a4a" stroke-width="1"/>
<line x1="690.66" y1="76" x2="690.66" y2="608" stroke="#4a4a4a" stroke-width="1"/>
<line x1="699.58" y1="76" x2="699.58" y2="608" stroke="#4a4a4a" stroke-width="1"/>
<line x1="708.50" y1="76" x2="708.50" y2="608" stroke="#565656" stroke-width="1"/>
<line x1="717.42" y1="76" x2="717.42" y2="608" stroke="#4a4a4a" stroke-width="1"/>
<line x1="726.34" y1="76" x2="726.34" y2="608" stroke="#4a4a4a" stroke-width="1"/>
<line x1="735.26" y1="76" x2="735.26" y2="608" stroke="#4a4a4a" stroke-width="1"/>
<line x1="744.18" y1="76" x2="744.18" y2="608" stroke="#4a4a4a" stroke-width="1"/>
<line x1="753.10" y1="76" x2="753.10" y2="608" stroke="#565656" stroke-width="1"/>
<line x1="762.02" y1="76" x2="762.02" y2="608" stroke="#4a4a4a" stroke-width="1"/>
<line x1="770.94" y1="76" x2="770.94" y2="608" stroke="#4a4a4a" stroke-width="1"/>
<line x1="779.86" y1="76" x2="779.86" y2="608" stroke="#4a4a4a" stroke-width="1"/>
<line x1="788.78" y1="76" x2="788.78" y2="608" stroke="#4a4a4a" stroke-width="1"/>
<line x1="797.70" y1="76" x2="797.70" y2="608" stroke="#565656" stroke-width="1"/>
<line x1="806.62" y1="76" x2="806.62" y2="608" stroke="#4a4a4a" stroke-width="1"/>
<line x1="815.54" y1="76" x2="815.54" y2="608" stroke="#4a4a4a" stroke-width="1"/>
<line x1="824.46" y1="76" x2="824.46" y2="608" stroke="#4a4a4a" stroke-width="1"/>
<line x1="833.38" y1="76" x2="833.38" y2="608" stroke="#4a4a4a" stroke-width="1"/>
<line x1="842.30" y1="76" x2="842.30" y2="608" stroke="#565656" stroke-width="1"/>
<line x1="851.22" y1="76" x2="851.22" y2="608" stroke="#4a4a4a" stroke-width="1"/>
<line x1="860.14" y1="76" x2="860.14" y2="608" stroke="#4a4a4a" stroke-width="1"/>
<line x1="869.06" y1="76" x2="869.06" y2="608" stroke="#4a4a4a" stroke-width="1"/>
<line x1="877.98" y1="76" x2="877.98" y2="608" stroke="#4a4a4a" stroke-width="1"/>
<line x1="886.90" y1="76" x2="886.90" y2="608" stroke="#565656" stroke-width="1"/>
<line x1="39" y1="76.50" x2="890" y2="76.50" stroke="#565656" stroke-width="1"/>
<line x1="39" y1="85.42" x2="890" y2="85.42" stroke="#4a4a4a" stroke-width="1"/>
<line x1="39" y1="94.34" x2="890" y2="94.34" stroke="#4a4a4a" stroke-width="1"/>
<line x1="39" y1="103.26" x2="890" y2="103.26" stroke="#4a4a4a" stroke-width="1"/>
<line x1="39" y1="112.18" x2="890" y2="112.18" stroke="#4a4a4a" stroke-width="1"/>
<line x1="39" y1="121.10" x2="890" y2="121.10" stroke="#565656" stroke-width="1"/>
<line x1="39" y1="130.02" x2="890" y2="130.02" stroke="#4a4a4a" stroke-width="1"/>
<line x1="39" y1="138.94" x2="890" y2="138.94" stroke="#4a4a4a" stroke-width="1"/>
<line x1="39" y1="147.86" x2="890" y2="147.86" stroke="#4a4a4a" stroke-width="1"/>
<line x1="39" y1="156.78" x2="890" y2="156.78" stroke="#4a4a4a" stroke-width="1"/>
<line x1="39" y1="165.70" x2="890" y2="165.70" stroke="#565656" stroke-width="1"/>
<line x1="39" y1="174.62" x2="890" y2="174.62" stroke="#4a4a4a" stroke-width="1"/>
<line x1="39" y1="183.54" x2="890" y2="183.54" stroke="#4a4a4a" stroke-width="1"/>
<line x1="39" y1="192.46" x2="890" y2="192.46" stroke="#4a4a4a" stroke-width="1"/>
<line x1="39" y1="201.38" x2="890" y2="201.38" stroke="#4a4a4a" stroke-width="1"/>
<line x1="39" y1="210.30" x2="890" y2="210.30" stroke="#565656" stroke-width="1"/>
<line x1="39" y1="219.22" x2="890" y2="219.22" stroke="#4a4a4a" stroke-width="1"/>
<line x1="39" y1="228.14" x2="890" y2="228.14" stroke="#4a4a4a" stroke-width="1"/>
<line x1="39" y1="237.06" x2="890" y2="237.06" stroke="#4a4a4a" stroke-width="1"/>
<line x1="39" y1="245.98" x2="890" y2="245.98" stroke="#4a4a4a" stroke-width="1"/>
<line x1="39" y1="254.90" x2="890" y2="254.90" stroke="#565656" stroke-width="1"/>
<line x1="39" y1="263.82" x2="890" y2="263.82" stroke="#4a4a4a" stroke-width="1"/>
<line x1="39" y1="272.74" x2="890" y2="272.74" stroke="#4a4a4a" stroke-width="1"/>
<line x1="39" y1="281.66" x2="890" y2="281.66" stroke="#4a4a4a" stroke-width="1"/>
<line x1="39" y1="290.58" x2="890" y2="290.58" stroke="#4a4a4a" stroke-width="1"/>
<line x1="39" y1="299.50" x2="890" y2="299.50" stroke="#565656" stroke-width="1"/>
<line x1="39" y1="308.42" x2="890" y2="308.42" stroke="#4a4a4a" stroke-width="1"/>
<line x1="39" y1="317.34" x2="890" y2="317.34" stroke="#4a4a4a" stroke-width="1"/>
<line x1="39" y1="326.26" x2="890" y2="326.26" stroke="#4a4a4a" stroke-width="1"/>
<line x1="39" y1="335.18" x2="890" y2="335.18" stroke="#4a4a4a" stroke-width="1"/>
<line x1="39" y1="344.10" x2="890" y2="344.10" stroke="#565656" stroke-width="1"/>
<line x1="39" y1="353.02" x2="890" y2="353.02" stroke="#4a4a4a" stroke-width="1"/>
<line x1="39" y1="361.94" x2="890" y2="361.94" stroke="#4a4a4a" stroke-width="1"/>
<line x1="39" y1="370.86" x2="890" y2="370.86" stroke="#4a4a4a" stroke-width="1"/>
<line x1="39" y1="379.78" x2="890" y2="379.78" stroke="#4a4a4a" stroke-width="1"/>
<line x1="39" y1="388.70" x2="890" y2="388.70" stroke="#565656" stroke-width="1"/>
<line x1="39" y1="397.62" x2="890" y2="397.62" stroke="#4a4a4a" stroke-width="1"/>
<line x1="39" y1="406.54" x2="890" y2="406.54" stroke="#4a4a4a" stroke-width="1"/>
<line x1="39" y1="415.46" x2="890" y2="415.46" stroke="#4a4a4a" stroke-width="1"/>
<line x1="39" y1="424.38" x2="890" y2="424.38" stroke="#4a4a4a" stroke-width="1"/>
<line x1="39" y1="433.30" x2="890" y2="433.30" stroke="#565656" stroke-width="1"/>
<line x1="39" y1="442.22" x2="890" y2="442.22" stroke="#4a4a4a" stroke-width="1"/>
<line x1="39" y1="451.14" x2="890" y2="451.14" stroke="#4a4a4a" stroke-width="1"/>
<line x1="39" y1="460.06" x2="890" y2="460.06" stroke="#4a4a4a" stroke-width="1"/>
<line x1="39" y1="468.98" x2="890" y2="468.98" stroke="#4a4a4a" stroke-width="1"/>
<line x1="39" y1="477.90" x2="890" y2="477.90" stroke="#565656" stroke-width="1"/>
<line x1="39" y1="486.82" x2="890" y2="486.82" stroke="#4a4a4a" stroke-width="1"/>
<line x1="39" y1="495.74" x2="890" y2="495.74" stroke="#4a4a4a" stroke-width="1"/>
<line x1="39" y1="504.66" x2="890" y2="504.66" stroke="#4a4a4a" stroke-width="1"/>
<line x1="39" y1="513.58" x2="890" y2="513.58" stroke="#4a4a4a" stroke-width="1"/>
<line x1="39" y1="522.50" x2="890" y2="522.50" stroke="#565656" stroke-width="1"/>
<line x1="39" y1="531.42" x2="890" y2="531.42" stroke="#4a4a4a" stroke-width="1"/>
<line x1="39" y1="540.34" x2="890" y2="540.34" stroke="#4a4a4a" stroke-width="1"/>
<line x1="39" y1="549.26" x2="890" y2="549.26" stroke="#4a4a4a" stroke-width="1"/>
<line x1="39" y1="558.18" x2="890" y2="558.18" stroke="#4a4a4a" stroke-width="1"/>
<line x1="39" y1="567.10" x2="890" y2="567.10" stroke="#565656" stroke-width="1"/>
<line x1="39" y1="576.02" x2="890" y2="576.02" stroke="#4a4a4a" stroke-width="1"/>
<line x1="39" y1="584.94" x2="890" y2="584.94" stroke="#4a4a4a" stroke-width="1"/>
<line x1="39" y1="593.86" x2="890" y2="593.86" stroke="#4a4a4a" stroke-width="1"/>
<line x1="39" y1="602.78" x2="890" y2="602.78" stroke="#4a4a4a" stroke-width="1"/></g>
  <rect x="39" y="76" width="833.5" height="519.5" rx="4" fill="#333" stroke="#1a1a1a" stroke-width="1" stroke-dasharray="1,1"/>
  <rect x="39" y="76" width="821" height="507" fill="#fff"/>
  <rect x="445" y="586" width="9" height="1.2" fill="#9a9a9a"/><rect x="445" y="588.6" width="9" height="1.2" fill="#9a9a9a"/><rect x="445" y="591.2" width="9" height="1.2" fill="#9a9a9a"/>
  <rect x="863" y="325" width="1.3" height="9" fill="#9a9a9a"/><rect x="865.8" y="325" width="1.3" height="9" fill="#9a9a9a"/><rect x="868.6" y="325" width="1.3" height="9" fill="#9a9a9a"/>
  <g><path d="M259.2,151.8L266.4,156.4L271.7,158.4L276.3,159.7L277.6,157.1L278.9,148.6L330.0,160.7L322.6,201.7L302.9,198.7L285.0,196.8L273.3,194.8L266.4,191.8L265.4,185.0L256.5,183.0L259.0,175.0L258.0,160.0Z" fill="#00441b"/><path d="M256.5,183.0L265.4,185.0L266.4,191.8L273.3,194.8L285.0,196.8L302.9,198.7L322.6,201.7L325.6,208.6L316.7,222.4L309.8,257.0L279.2,252.0L236.8,238.5L239.7,221.4L249.6,199.7Z" fill="#238b45"/><path d="M330.0,160.7L339.7,163.7L337.8,173.6L339.7,185.4L348.6,199.2L345.7,213.0L351.6,215.0L355.5,224.9L358.5,231.8L374.3,230.8L377.2,228.8L371.0,268.5L339.5,265.5L309.8,257.0L316.7,222.4L325.6,208.6L322.6,201.7Z" fill="#74c476"/><path d="M339.7,163.7L451.2,180.5L446.3,235.7L377.2,228.8L374.3,230.8L358.5,231.8L355.5,224.9L351.6,215.0L345.7,213.0L348.6,199.2L339.7,185.4L337.8,173.6Z" fill="#006d2c"/><path d="M377.2,228.8L446.3,235.7L441.8,291.4L388.8,286.8L370.0,283.3L371.0,268.5Z" fill="#74c476"/><path d="M279.2,252.0L309.8,257.0L339.5,265.5L325.7,336.6L324.7,345.7L316.8,346.6L314.9,359.5L308.4,348.4L269.9,291.2Z" fill="#a1d99b"/><path d="M339.5,265.5L371.0,268.5L370.0,283.3L388.8,286.8L381.9,342.5L325.7,336.6Z" fill="#c7e9c0"/><path d="M325.7,336.6L381.9,342.5L371.0,422.8L346.4,418.7L306.0,395.0L307.0,393.0L310.9,387.1L310.0,383.2L315.8,373.3L316.8,365.4L314.9,359.5L316.8,346.6L324.7,345.7Z" fill="#41ab5d"/><path d="M236.8,238.5L279.2,252.0L269.9,291.2L308.4,348.4L314.9,359.5L316.8,365.4L315.8,373.3L310.0,383.2L310.9,387.1L307.0,393.0L279.3,389.0L277.4,379.2L266.5,366.4L257.6,357.5L246.8,350.6L245.8,338.7L240.3,322.8L241.3,316.8L236.4,309.0L235.4,297.0L229.5,287.2L232.4,279.3L230.5,271.4L229.5,259.6L233.4,249.7L236.4,241.8Z" fill="#c7e9c0"/><path d="M388.8,286.8L441.8,291.4L462.6,294.4L460.6,351.0L448.9,350.7L381.9,342.5Z" fill="#c7e9c0"/><path d="M381.9,342.5L448.9,350.7L448.0,357.6L442.9,421.0L400.6,418.8L380.9,419.8L380.9,423.7L371.0,422.8Z" fill="#74c476"/><path d="M451.2,180.5L515.8,183.3L518.8,205.4L520.8,226.1L447.4,223.2Z" fill="#e5f5e0"/><path d="M447.4,223.2L520.8,226.1L518.8,231.0L521.8,260.7L520.8,269.7L522.8,274.5L514.9,270.5L497.1,267.6L444.0,264.6L446.3,235.7Z" fill="#e5f5e0"/><path d="M444.0,264.6L497.1,267.6L514.9,270.5L522.8,274.5L524.7,283.6L527.7,295.4L529.7,302.8L536.6,312.2L462.6,309.2L462.6,294.4L441.8,291.4Z" fill="#e5f5e0"/><path d="M462.6,309.2L536.6,312.2L541.6,319.6L541.6,351.6L460.6,351.0Z" fill="#e5f5e0"/><path d="M448.9,350.7L460.6,351.0L541.6,351.6L544.2,399.6L523.5,399.6L502.8,396.1L486.7,390.4L480.9,386.9L481.5,358.6L448.0,357.6Z" fill="#e5f5e0"/><path d="M448.0,357.6L481.5,358.6L480.9,386.9L486.7,390.4L502.8,396.1L523.5,399.6L544.2,399.6L551.0,402.0L550.1,409.0L550.1,420.2L556.9,438.2L553.5,456.2L539.6,460.6L518.9,472.1L509.7,483.6L507.4,495.1L509.7,510.1L491.3,502.0L484.4,495.1L477.5,481.3L468.3,465.2L459.1,456.0L445.2,453.7L436.0,462.9L424.5,456.0L419.9,439.9L413.0,428.3L400.6,418.8L442.9,421.0Z" fill="#f7fcf5"/><path d="M515.8,183.3L534.6,178.7L537.6,179.7L539.5,185.7L555.0,188.8L560.9,189.8L569.8,194.7L584.6,194.7L598.4,192.8L584.6,200.6L574.7,205.6L564.9,214.4L562.2,217.2L560.3,239.0L568.1,246.8L576.0,256.7L576.0,260.7L521.8,260.7L518.8,231.0L520.8,226.1L518.8,205.4Z" fill="#e5f5e0"/><path d="M521.8,260.7L576.0,260.7L580.0,266.0L577.8,271.7L585.7,275.7L588.6,282.6L581.7,293.4L575.8,303.3L529.7,302.8L527.7,295.4L524.7,283.6L522.8,274.5L520.8,269.7Z" fill="#e5f5e0"/><path d="M529.7,302.8L575.8,303.3L577.8,311.2L589.6,325.0L591.6,334.9L598.5,338.8L602.4,352.6L598.8,358.1L597.8,365.0L591.9,365.0L592.9,359.1L542.6,360.1L541.6,319.6L536.6,312.2Z" fill="#c7e9c0"/><path d="M542.6,360.1L592.9,359.1L591.9,365.0L597.8,365.0L592.9,376.8L588.9,388.7L583.8,409.0L550.1,409.0L551.0,402.0L544.2,399.6Z" fill="#e5f5e0"/><path d="M550.1,409.0L583.8,409.0L587.2,421.3L580.4,436.0L601.8,437.1L605.2,446.1L607.4,453.9L593.9,459.6L576.0,457.3L553.5,456.2L556.9,438.2L550.1,420.2Z" fill="#f7fcf5"/><path d="M564.9,214.4L572.0,214.0L581.6,216.4L594.4,219.4L606.3,224.3L609.9,232.5L608.0,240.0L614.8,229.5L613.0,238.0L611.8,245.0L611.3,255.0L612.3,271.7L577.8,271.7L580.0,266.0L576.0,260.7L576.0,256.7L568.1,246.8L560.3,239.0L562.2,217.2Z" fill="#e5f5e0"/><path d="M577.8,271.7L612.3,271.7L616.2,282.6L618.2,319.1L615.3,335.9L613.3,342.8L607.4,348.7L602.4,352.6L598.5,338.8L591.6,334.9L589.6,325.0L577.8,311.2L575.8,303.3L581.7,293.4L588.6,282.6L585.7,275.7Z" fill="#e5f5e0"/><path d="M616.2,282.6L644.9,278.6L647.8,316.1L642.9,322.0L636.0,328.9L631.0,334.9L621.2,335.9L615.3,335.9L618.2,319.1Z" fill="#e5f5e0"/><path d="M636.5,222.6L644.4,223.6L650.3,226.6L653.3,237.4L650.3,248.3L658.2,243.3L663.1,247.3L664.8,256.6L663.5,263.4L659.4,271.5L658.7,277.6L623.2,280.6L617.2,281.5L616.0,270.0L618.0,258.0L623.7,244.3L625.6,236.4L632.5,236.4L630.6,226.6ZM581.6,216.4L594.4,208.5L609.2,204.6L617.8,212.3L632.5,209.3L634.5,212.8L641.4,211.8L644.4,216.7L649.3,217.2L648.3,218.7L637.5,219.7L629.6,218.7L619.7,222.6L613.8,228.5L609.9,232.5L606.3,224.3L594.4,219.4Z" fill="#e5f5e0"/><path d="M644.9,278.6L657.8,277.4L665.7,279.3L677.5,276.4L688.4,270.5L691.3,293.2L692.3,298.1L686.4,307.0L681.4,312.9L676.4,315.1L670.5,320.1L662.6,320.1L647.8,316.1Z" fill="#e5f5e0"/><path d="M602.4,352.6L607.4,348.7L613.3,342.8L615.3,335.9L621.2,335.9L631.0,334.9L636.0,328.9L642.9,322.0L647.8,316.1L662.6,320.1L670.5,320.1L676.4,315.1L678.4,325.0L679.5,336.6L669.6,348.4L635.0,353.6L603.4,357.6L598.8,358.1Z" fill="#e5f5e0"/><path d="M598.8,358.1L603.4,357.6L635.0,353.6L669.6,348.4L687.2,348.2L683.2,352.2L675.1,360.3L665.0,366.4L660.9,372.5L646.7,375.5L617.4,378.5L595.2,379.6L592.9,376.8L597.8,365.0Z" fill="#e5f5e0"/><path d="M595.2,379.6L617.4,378.5L616.4,435.2L619.4,449.3L605.3,446.3L602.2,440.2L602.2,436.2L580.4,436.0L587.2,421.3L583.8,409.0L586.1,398.8L588.9,388.7L592.9,376.8Z" fill="#f7fcf5"/><path d="M617.4,378.5L646.7,375.5L656.9,412.9L658.9,421.0L658.9,431.1L661.3,434.8L628.8,434.8L629.6,438.2L630.6,441.2L621.5,445.3L619.4,449.3L616.4,435.2Z" fill="#f7fcf5"/><path d="M646.7,375.5L673.0,372.5L673.0,375.5L681.1,384.6L693.3,396.7L703.4,408.9L703.4,427.1L700.7,430.3L696.2,429.2L695.1,433.7L661.3,434.8L658.9,431.1L658.9,421.0L656.9,412.9Z" fill="#f7fcf5"/><path d="M628.8,434.8L659.1,431.5L661.3,434.8L695.1,433.7L696.2,429.2L700.7,430.3L704.0,444.9L715.3,458.4L726.5,474.2L729.9,489.9L726.5,503.4L719.8,505.6L710.8,496.6L701.8,485.4L692.8,471.9L692.8,460.7L683.8,449.4L672.6,443.8L659.1,448.3L645.6,442.7L629.9,442.7Z" fill="#e5f5e0"/><path d="M673.0,372.5L685.2,367.4L695.3,366.4L701.4,369.4L714.5,368.4L729.7,379.6L723.6,382.6L717.5,394.7L705.4,406.9L703.4,408.9L693.3,396.7L681.1,384.6L673.0,375.5Z" fill="#e5f5e0"/><path d="M687.2,348.2L749.9,336.1L753.9,346.2L747.9,358.3L737.8,370.5L729.7,379.6L714.5,368.4L701.4,369.4L695.3,366.4L685.2,367.4L673.0,372.5L660.9,372.5L665.0,366.4L675.1,360.3L683.2,352.2Z" fill="#e5f5e0"/><path d="M669.6,348.4L679.5,336.6L687.4,337.6L691.3,334.6L704.1,319.8L709.1,314.9L715.0,302.0L722.9,303.0L732.8,306.0L740.0,316.0L746.6,332.6L749.9,336.1L687.2,348.2Z" fill="#f7fcf5"/><path d="M692.3,298.1L693.3,300.0L705.1,300.0L705.1,305.0L713.0,298.1L718.9,298.1L722.9,303.0L715.0,302.0L709.1,314.9L704.1,319.8L691.3,334.6L687.4,337.6L679.5,336.6L678.4,325.0L676.4,315.1L681.4,312.9L686.4,307.0Z" fill="#c7e9c0"/><path d="M688.4,270.5L695.3,265.5L695.2,267.4L739.0,259.3L748.4,266.1L746.6,272.4L752.5,283.3L746.6,289.2L742.6,292.2L693.3,300.0L692.3,298.1L691.3,293.2Z" fill="#e5f5e0"/><path d="M693.3,300.0L742.6,292.2L743.6,291.2L747.5,306.0L741.0,315.0L736.0,309.0L732.8,306.0L722.9,303.0L718.9,298.1L713.0,298.1L705.1,305.0L705.1,300.0Z" fill="#f7fcf5"/><path d="M743.6,291.2L747.6,291.2L753.5,306.0L747.5,306.0Z" fill="#e5f5e0"/><path d="M740.7,259.6L758.4,268.5L756.4,275.4L760.4,279.3L758.4,291.2L752.5,295.1L746.6,289.2L752.5,283.3L746.6,272.4L748.4,266.1Z" fill="#f7fcf5"/><path d="M695.2,267.4L739.0,259.3L748.4,266.1L759.2,267.4L761.2,266.1L759.2,243.1L755.2,229.7L751.8,212.8L736.3,216.2L730.9,221.6L725.5,231.0L726.9,239.1L713.4,243.8L701.2,246.5L699.9,249.9L702.6,253.9L695.8,263.4ZM761.5,266.5L781.0,254.5L783.5,255.5L763.0,268.5Z" fill="#f7fcf5"/><path d="M759.5,253.7L777.2,249.7L778.2,256.6L761.4,267.5Z" fill="#c7e9c0"/><path d="M777.2,249.7L779.2,249.7L782.2,255.7L778.2,256.6Z" fill="#c7e9c0"/><path d="M759.5,242.8L766.4,240.9L784.1,234.9L785.1,237.9L783.2,242.8L791.0,245.8L795.0,248.7L794.0,251.7L785.1,252.7L780.2,249.7L759.5,253.7Z" fill="#e5f5e0"/><path d="M751.6,212.2L768.4,208.3L767.4,220.1L765.4,230.0L766.4,241.8L759.5,242.8L756.5,228.0L752.6,220.1Z" fill="#238b45"/><path d="M769.3,203.4L772.3,204.3L783.2,234.0L784.1,234.9L766.4,240.9L765.4,230.0L767.4,220.1L768.4,208.3Z" fill="#74c476"/><path d="M781.8,169.2L785.8,171.2L790.4,168.2L795.7,170.5L801.6,189.0L805.5,190.3L808.2,194.9L812.8,198.2L810.8,201.4L805.5,204.7L803.0,207.5L801.6,208.0L797.0,208.7L795.0,212.6L793.0,213.5L791.0,216.6L787.8,220.5L785.8,224.5L784.5,228.0L783.2,231.0L783.2,234.0L772.3,204.3L775.9,198.2L776.6,187.6L778.6,179.7Z" fill="#238b45"/><path d="M255.4,440.2L264.4,432.4L273.4,429.4L286.9,433.5L299.2,433.9L307.9,480.2L312.6,479.5L322.1,480.2L342.3,492.4L341.6,499.1L336.9,500.4L322.1,491.0L316.7,486.3L311.3,482.2L300.5,481.6L293.8,480.2L291.1,483.6L284.3,488.3L283.0,485.6L288.4,478.9L287.0,477.5L281.6,481.6L277.6,489.7L269.5,497.1L260.1,503.1L249.3,507.9L238.5,511.9L233.1,513.9L245.2,507.2L258.7,501.1L268.1,493.7L269.5,489.7L265.4,489.0L257.4,487.6L257.4,482.9L250.6,477.5L250.6,473.5L254.7,468.1L261.4,465.4L261.0,463.8L256.5,461.6L250.9,458.2L249.8,453.7L256.5,451.5L262.1,451.5L258.8,444.7ZM237.0,461.0L241.0,461.0L243.0,463.5L239.0,463.5ZM244.0,480.0L247.5,479.5L247.5,482.0L244.5,482.0ZM275.6,497.8L281.6,492.4L281.0,496.4L277.6,499.8ZM226.0,514.0L230.0,513.3L230.0,514.5L226.0,515.0ZM219.0,513.3L222.0,513.0L222.0,514.0L219.0,514.2ZM212.0,512.0L215.0,511.5L215.0,512.5L212.0,513.0ZM204.0,510.5L207.0,510.2L207.0,511.2L204.0,511.5ZM196.0,508.0L198.5,507.5L198.5,508.5L196.0,509.0ZM188.0,504.5L190.0,504.0L190.0,505.5L188.0,505.5ZM181.0,495.0L182.5,494.5L182.5,496.5L181.0,496.5Z" fill="#238b45"/><path d="M409.6,496.6L416.5,499.5L423.4,506.4L412.5,514.4L409.0,509.8L407.3,503.5ZM358.5,469.0L363.5,468.5L364.0,472.5L359.0,473.0ZM352.0,473.0L354.0,472.0L353.0,475.0ZM378.0,476.0L382.0,476.0L385.5,481.6L380.0,481.0ZM391.2,483.0L397.5,483.5L397.0,485.0L391.0,484.5ZM399.3,485.7L404.0,486.5L407.9,489.0L404.0,490.9L400.0,489.0ZM394.0,487.0L396.5,487.5L396.0,489.0L394.0,488.5Z" fill="#c7e9c0"/></g><path d="M256.8,182.0L256.5,183.0L265.4,185.0L266.4,191.8L273.3,194.8L285.0,196.8L302.9,198.7L322.6,201.7L330.0,160.7L329.0,160.5M256.5,183.0L256.1,183.9M237.0,237.5L236.8,238.5L279.2,252.0L309.8,257.0L316.7,222.4L325.6,208.6L322.6,201.7L302.9,198.7L285.0,196.8L273.3,194.8L266.4,191.8L265.4,185.0L256.5,183.0M330.0,160.7L322.6,201.7L325.6,208.6L316.7,222.4L309.8,257.0L339.5,265.5L371.0,268.5L377.2,228.8L374.3,230.8L358.5,231.8L355.5,224.9L351.6,215.0L345.7,213.0L348.6,199.2L339.7,185.4L337.8,173.6L339.7,163.7L338.7,163.4M331.0,161.0L330.0,160.7M339.7,163.7L337.8,173.6L339.7,185.4L348.6,199.2L345.7,213.0L351.6,215.0L355.5,224.9L358.5,231.8L374.3,230.8L377.2,228.8L446.3,235.7L451.2,180.5L450.2,180.4M340.7,163.8L339.7,163.7M377.2,228.8L371.0,268.5L370.0,283.3L388.8,286.8L441.8,291.4L446.3,235.7L377.2,228.8M279.2,252.0L269.9,291.2L308.4,348.4L314.9,359.5L316.8,346.6L324.7,345.7L325.7,336.6L339.5,265.5L309.8,257.0L279.2,252.0M339.5,265.5L325.7,336.6L381.9,342.5L388.8,286.8L370.0,283.3L371.0,268.5L339.5,265.5M325.7,336.6L324.7,345.7L316.8,346.6L314.9,359.5L316.8,365.4L315.8,373.3L310.0,383.2L310.9,387.1L307.0,393.0L306.5,393.9M370.0,422.6L371.0,422.8L381.9,342.5L325.7,336.6M236.8,238.5L236.7,239.5M306.0,392.8L307.0,393.0L310.9,387.1L310.0,383.2L315.8,373.3L316.8,365.4L314.9,359.5L308.4,348.4L269.9,291.2L279.2,252.0L236.8,238.5M388.8,286.8L381.9,342.5L448.9,350.7L460.6,351.0L462.6,294.4L441.8,291.4L388.8,286.8M381.9,342.5L371.0,422.8L372.0,422.9M399.6,418.9L400.6,418.8L442.9,421.0L448.0,357.6L448.9,350.7L381.9,342.5M451.2,180.5L447.4,223.2L520.8,226.1L518.8,205.4L515.8,183.3L514.8,183.3M452.2,180.5L451.2,180.5M447.4,223.2L446.3,235.7L444.0,264.6L497.1,267.6L514.9,270.5L522.8,274.5L520.8,269.7L521.8,260.7L518.8,231.0L520.8,226.1L447.4,223.2M444.0,264.6L441.8,291.4L462.6,294.4L462.6,309.2L536.6,312.2L529.7,302.8L527.7,295.4L524.7,283.6L522.8,274.5L514.9,270.5L497.1,267.6L444.0,264.6M462.6,309.2L460.6,351.0L541.6,351.6L541.6,319.6L536.6,312.2L462.6,309.2M448.9,350.7L448.0,357.6L481.5,358.6L480.9,386.9L486.7,390.4L502.8,396.1L523.5,399.6L544.2,399.6L541.6,351.6L460.6,351.0L448.9,350.7M448.0,357.6L442.9,421.0L400.6,418.8L402.0,419.9M552.5,456.5L553.5,456.2L556.9,438.2L550.1,420.2L550.1,409.0L551.0,402.0L544.2,399.6L523.5,399.6L502.8,396.1L486.7,390.4L480.9,386.9L481.5,358.6L448.0,357.6M515.8,183.3L518.8,205.4L520.8,226.1L518.8,231.0L521.8,260.7L576.0,260.7L576.0,256.7L568.1,246.8L560.3,239.0L562.2,217.2L564.9,214.4L566.1,213.3M516.8,183.1L515.8,183.3M521.8,260.7L520.8,269.7L522.8,274.5L524.7,283.6L527.7,295.4L529.7,302.8L575.8,303.3L581.7,293.4L588.6,282.6L585.7,275.7L577.8,271.7L580.0,266.0L576.0,260.7L521.8,260.7M529.7,302.8L536.6,312.2L541.6,319.6L542.6,360.1L592.9,359.1L591.9,365.0L597.8,365.0L598.8,358.1L602.4,352.6L598.5,338.8L591.6,334.9L589.6,325.0L577.8,311.2L575.8,303.3L529.7,302.8M542.6,360.1L544.2,399.6L551.0,402.0L550.1,409.0L583.8,409.0L588.9,388.7L592.9,376.8L597.8,365.0L591.9,365.0L592.9,359.1L542.6,360.1M550.1,409.0L550.1,420.2L556.9,438.2L553.5,456.2L554.5,456.2M605.6,447.4L605.2,446.1L601.8,437.1L580.4,436.0L587.2,421.3L583.8,409.0L550.1,409.0M564.9,214.4L562.2,217.2L560.3,239.0L568.1,246.8L576.0,256.7L576.0,260.7L580.0,266.0L577.8,271.7L612.3,271.7L612.2,270.7M609.7,233.5L609.9,232.5L606.3,224.3L594.4,219.4L581.6,216.4L580.6,216.2M566.5,214.3L564.9,214.4M577.8,271.7L585.7,275.7L588.6,282.6L581.7,293.4L575.8,303.3L577.8,311.2L589.6,325.0L591.6,334.9L598.5,338.8L602.4,352.6L607.4,348.7L613.3,342.8L615.3,335.9L618.2,319.1L616.2,282.6L615.9,281.7M612.6,272.6L612.3,271.7L577.8,271.7M616.2,282.6L618.2,319.1L615.3,335.9L621.2,335.9L631.0,334.9L636.0,328.9L642.9,322.0L647.8,316.1L644.9,278.6L623.6,281.6M622.0,281.8L616.2,282.6M617.2,281.5L617.2,281.5L621.8,280.8M623.5,280.6L658.7,277.6L658.8,276.6M581.6,216.4L594.4,219.4L606.3,224.3L609.9,232.5L610.7,231.7M582.8,215.7L581.6,216.4M644.9,278.6L647.8,316.1L662.6,320.1L670.5,320.1L676.4,315.1L681.4,312.9L686.4,307.0L692.3,298.1L691.3,293.2L688.4,270.5L687.5,271.0M659.7,277.8L657.8,277.4L644.9,278.6M602.4,352.6L598.8,358.1L603.4,357.6L635.0,353.6L669.6,348.4L679.5,336.6L678.4,325.0L676.4,315.1L670.5,320.1L662.6,320.1L647.8,316.1L642.9,322.0L636.0,328.9L631.0,334.9L621.2,335.9L615.3,335.9L613.3,342.8L607.4,348.7L602.4,352.6M598.8,358.1L597.8,365.0L592.9,376.8L595.2,379.6L617.4,378.5L646.7,375.5L657.1,373.3M659.9,372.7L660.9,372.5L665.0,366.4L675.1,360.3L683.2,352.2L687.2,348.2L669.6,348.4L635.0,353.6L603.4,357.6L598.8,358.1M595.2,379.6L592.9,376.8L588.9,388.7L586.1,398.8L583.8,409.0L587.2,421.3L580.4,436.0L602.2,436.2L602.2,440.2L605.3,446.3L606.4,446.5M618.3,449.1L619.4,449.3L616.4,435.2L617.4,378.5L595.2,379.6M617.4,378.5L616.4,435.2L619.4,449.3L620.1,447.9M628.8,442.0L630.6,441.2L629.6,438.2L628.8,434.8L661.3,434.8L658.9,431.1L658.9,421.0L656.9,412.9L646.7,375.5L617.4,378.5M646.7,375.5L656.9,412.9L658.9,421.0L658.9,431.1L661.3,434.8L695.1,433.7L696.2,429.2L700.7,430.3L701.3,429.5M703.4,409.9L703.4,408.9L693.3,396.7L681.1,384.6L673.0,375.5L673.0,372.5L664.2,373.5M657.2,374.3L646.7,375.5M628.8,434.8L629.9,442.6M700.9,431.3L700.7,430.3L696.2,429.2L695.1,433.7L661.3,434.8L659.1,431.5L628.8,434.8M673.0,372.5L673.0,375.5L681.1,384.6L693.3,396.7L703.4,408.9L704.1,408.2M728.7,380.1L729.7,379.6L714.5,368.4L701.4,369.4L695.3,366.4L685.2,367.4L673.0,372.5M687.2,348.2L683.2,352.2L675.1,360.3L665.0,366.4L660.9,372.5L662.1,372.5M664.2,372.5L673.0,372.5L685.2,367.4L695.3,366.4L701.4,369.4L714.5,368.4L729.7,379.6L730.4,378.9M750.3,337.0L749.9,336.1L687.2,348.2M669.6,348.4L687.2,348.2L749.9,336.1L749.1,335.2M736.6,311.3L732.8,306.0L722.9,303.0L715.0,302.0L709.1,314.9L704.1,319.8L691.3,334.6L687.4,337.6L679.5,336.6L669.6,348.4M692.3,298.1L686.4,307.0L681.4,312.9L676.4,315.1L678.4,325.0L679.5,336.6L687.4,337.6L691.3,334.6L704.1,319.8L709.1,314.9L715.0,302.0L722.9,303.0L718.9,298.1L713.0,298.1L705.1,305.0L705.1,300.0L693.3,300.0L692.3,298.1M688.4,270.5L691.3,293.2L692.3,298.1L693.3,300.0L742.6,292.2L745.3,290.2M745.8,289.8L746.6,289.2L752.5,283.3L746.6,272.4L748.4,266.1L739.0,259.3L695.2,267.4L695.3,265.5L694.4,266.2M689.2,269.9L688.4,270.5M693.3,300.0L705.1,300.0L705.1,305.0L713.0,298.1L718.9,298.1L722.9,303.0L732.8,306.0L736.0,309.0L737.4,310.7M746.9,306.8L747.5,306.0L743.6,291.2L742.6,292.2L693.3,300.0M743.6,291.2L747.5,306.0L748.5,306.0M747.9,291.9L747.6,291.2L747.2,291.2M745.6,291.2L743.6,291.2M740.7,259.6L748.4,266.1L746.6,272.4L752.5,283.3L746.6,289.2L747.3,289.9M747.6,290.2L748.7,291.3M757.9,268.3L740.7,259.6M695.2,267.4L739.0,259.3L748.4,266.1L758.2,267.3M760.3,266.7L761.2,266.1L759.2,243.1L757.1,236.2M754.5,226.2L751.8,212.8L750.7,213.0M695.6,264.6L695.2,267.4M761.5,266.5L762.6,267.9M781.2,256.9L783.2,255.7M783.1,255.4L781.0,254.5L761.5,266.5M759.5,253.7L761.4,267.5L778.2,256.6L777.2,249.7L759.5,253.7M777.2,249.7L778.2,256.6L782.2,255.7L781.1,253.5M779.8,250.8L779.2,249.7L777.2,249.7M759.5,242.8L759.5,253.7L780.2,249.7L780.4,249.8M784.4,235.8L784.1,234.9L766.4,240.9L759.5,242.8M751.6,212.2L752.6,220.1L755.5,225.9M758.1,236.0L759.5,242.8L766.4,241.8L765.4,230.0L767.4,220.1L768.4,208.3L767.4,208.5M752.4,212.0L751.6,212.2M768.6,207.3L768.4,208.3L767.4,220.1L765.4,230.0L766.4,240.9L784.1,234.9L783.2,234.0L772.3,204.3L771.3,204.0M772.8,203.4L772.3,204.3L783.2,234.0L783.2,231.1" fill="none" stroke="#c6c6c6" stroke-width="0.6" stroke-linejoin="round"/><path d="M277.5,158 L278.6,161 L277.2,164 L278,167 L275.5,170.5 L272.5,172.5 M277,164.5 L273.5,166 M276,168.5 L271,173.5 M279,159 L280.5,161" stroke="#fff" stroke-width="0.8" fill="none" stroke-linecap="round"/><g fill="#e07070" fill-opacity="0.6"><rect x="365" y="310" width="1" height="1"/><rect x="371" y="306" width="1" height="1"/><rect x="352" y="312" width="1" height="1"/><rect x="358" y="327" width="1" height="1"/><rect x="364" y="333" width="1" height="1"/><rect x="381" y="320" width="1" height="1"/><rect x="396" y="321" width="1" height="1"/><rect x="402" y="311" width="1" height="1"/><rect x="424" y="330" width="1" height="1"/><rect x="432" y="326" width="1" height="1"/><rect x="440" y="317" width="1" height="1"/><rect x="447" y="309" width="1" height="1"/><rect x="428" y="300" width="1" height="1"/><rect x="418" y="312" width="1" height="1"/><rect x="407" y="302" width="1" height="1"/><rect x="376" y="294" width="1" height="1"/><rect x="360" y="296" width="1" height="1"/><rect x="343" y="304" width="1" height="1"/><rect x="331" y="318" width="1" height="1"/><rect x="300" y="290" width="1" height="1"/><rect x="288" y="304" width="1" height="1"/><rect x="385" y="347" width="1" height="1"/><rect x="420" y="337" width="1" height="1"/><rect x="433" y="341" width="1" height="1"/><rect x="451" y="335" width="1" height="1"/><rect x="438" y="360" width="1" height="1"/><rect x="314" y="277" width="1" height="1"/><rect x="303" y="296" width="1" height="1"/><rect x="280" y="282" width="1" height="1"/></g><g fill="#e9d3ae" fill-opacity="0.6"><circle cx="254" cy="164.6" r="1.7"/><circle cx="253.2" cy="169.1" r="1.7"/><circle cx="235.5" cy="180.2" r="1.7"/><circle cx="219" cy="209.6" r="1.7"/><circle cx="222.5" cy="214.3" r="1.7"/><circle cx="227.4" cy="227.8" r="1.7"/><circle cx="218.7" cy="228.6" r="1.7"/><circle cx="207" cy="241" r="1.7"/><circle cx="209" cy="244" r="1.7"/><circle cx="208" cy="247" r="1.7"/><circle cx="210" cy="249" r="1.7"/><circle cx="211" cy="243" r="1.7"/><circle cx="230" cy="292.5" r="1.7"/><circle cx="232" cy="296" r="1.7"/><circle cx="427.3" cy="171.5" r="1.7"/><circle cx="467.9" cy="186.4" r="1.7"/><circle cx="468.5" cy="199.3" r="1.7"/><circle cx="455.6" cy="207.4" r="1.7"/><circle cx="463.2" cy="207.4" r="1.7"/><circle cx="473.3" cy="217.5" r="1.7"/><circle cx="459.4" cy="228.5" r="1.7"/><circle cx="476.6" cy="226.8" r="1.7"/><circle cx="467.8" cy="186.5" r="1.7"/><circle cx="495.6" cy="202" r="1.7"/><circle cx="468.7" cy="199.5" r="1.7"/><circle cx="456" cy="207.4" r="1.7"/><circle cx="463.6" cy="207.4" r="1.7"/><circle cx="473.7" cy="217.2" r="1.7"/><circle cx="480.5" cy="216.2" r="1.7"/><circle cx="485.2" cy="215.8" r="1.7"/><circle cx="510.8" cy="217.2" r="1.7"/><circle cx="516.7" cy="218" r="1.7"/><circle cx="520.6" cy="218.9" r="1.7"/><circle cx="459.4" cy="229" r="1.7"/><circle cx="476.7" cy="227" r="1.7"/><circle cx="489.2" cy="232.4" r="1.7"/><circle cx="505.7" cy="237" r="1.7"/><circle cx="507.4" cy="243.3" r="1.7"/><circle cx="504.9" cy="247.9" r="1.7"/><circle cx="509.4" cy="248.4" r="1.7"/><circle cx="485.5" cy="245.5" r="1.7"/><circle cx="460.2" cy="251.4" r="1.7"/><circle cx="473.7" cy="251.7" r="1.7"/><circle cx="515" cy="253.4" r="1.7"/><circle cx="505.7" cy="256.8" r="1.7"/><circle cx="520" cy="228" r="1.7"/><circle cx="527.6" cy="238.3" r="1.7"/><circle cx="534.4" cy="227.3" r="1.7"/><circle cx="537.4" cy="233.2" r="1.7"/><circle cx="537.8" cy="237.4" r="1.7"/><circle cx="546.2" cy="236.6" r="1.7"/><circle cx="541.1" cy="229.8" r="1.7"/><circle cx="555.5" cy="203.7" r="1.7"/><circle cx="554.6" cy="208.8" r="1.7"/><circle cx="569" cy="207" r="1.7"/><circle cx="574" cy="215.2" r="1.7"/><circle cx="571.5" cy="218.9" r="1.7"/><circle cx="562.2" cy="220.6" r="1.7"/><circle cx="563.8" cy="224" r="1.7"/><circle cx="569" cy="233.3" r="1.7"/><circle cx="547.9" cy="255.1" r="1.7"/><circle cx="537.8" cy="256.8" r="1.7"/><circle cx="532.7" cy="261" r="1.7"/><circle cx="544.5" cy="262.7" r="1.7"/><circle cx="558" cy="258.5" r="1.7"/><circle cx="564.7" cy="264.4" r="1.7"/><circle cx="586.6" cy="224.8" r="1.7"/><circle cx="586.6" cy="236.6" r="1.7"/><circle cx="592.9" cy="183.2" r="1.7"/><circle cx="586.3" cy="175.5" r="1.7"/><circle cx="581.6" cy="182.5" r="1.7"/><circle cx="586.3" cy="190.6" r="1.7"/><circle cx="593.6" cy="193" r="1.7"/><circle cx="599" cy="195.3" r="1.7"/><circle cx="569" cy="207" r="1.7"/><circle cx="593.7" cy="211.1" r="1.7"/><circle cx="601.1" cy="215.2" r="1.7"/><circle cx="571.5" cy="218.5" r="1.7"/><circle cx="571.8" cy="223.4" r="1.7"/><circle cx="562.5" cy="232.5" r="1.7"/><circle cx="569.9" cy="242.4" r="1.7"/><circle cx="597.5" cy="236.5" r="1.7"/><circle cx="576.4" cy="247.3" r="1.7"/><circle cx="563.3" cy="258.8" r="1.7"/><circle cx="481.3" cy="272.6" r="1.7"/><circle cx="489.7" cy="270.4" r="1.7"/><circle cx="476.2" cy="277.7" r="1.7"/><circle cx="475.7" cy="283.3" r="1.7"/><circle cx="493.9" cy="276.9" r="1.7"/><circle cx="494" cy="281.9" r="1.7"/><circle cx="500.7" cy="288.7" r="1.7"/><circle cx="523.4" cy="287" r="1.7"/><circle cx="535.2" cy="269.3" r="1.7"/><circle cx="535.9" cy="273.5" r="1.7"/><circle cx="555.5" cy="281.9" r="1.7"/><circle cx="573.2" cy="281.9" r="1.7"/><circle cx="588.3" cy="290.3" r="1.7"/><circle cx="582.4" cy="287" r="1.7"/><circle cx="506.6" cy="265.9" r="1.7"/><circle cx="544.5" cy="264.2" r="1.7"/><circle cx="547.8" cy="266.7" r="1.7"/><circle cx="565.6" cy="265" r="1.7"/><circle cx="487.2" cy="305.2" r="1.7"/><circle cx="503.2" cy="316.5" r="1.7"/><circle cx="509.1" cy="321.5" r="1.7"/><circle cx="504" cy="324.9" r="1.7"/><circle cx="499.8" cy="326.6" r="1.7"/><circle cx="483" cy="325.7" r="1.7"/><circle cx="466.1" cy="319.8" r="1.7"/><circle cx="529.3" cy="335" r="1.7"/><circle cx="541.1" cy="344.3" r="1.7"/><circle cx="515.8" cy="343.4" r="1.7"/><circle cx="462.8" cy="310.6" r="1.7"/><circle cx="573.9" cy="389.3" r="1.7"/><circle cx="553.7" cy="368.8" r="1.7"/><circle cx="547.8" cy="364.6" r="1.7"/><circle cx="529.3" cy="335" r="1.7"/></g><g fill="#fff" stroke="#4356cc" stroke-width="1" stroke-linejoin="round"><path transform="translate(268.4,152.8)" d="M-1.5,-3.4Q0,-3.9 1.5,-3.4L1.2,-1.2L3.4,-1.5Q3.9,0 3.4,1.5L1.2,1.2L1.5,3.4Q0,3.9 -1.5,3.4L-1.2,1.2L-3.4,1.5Q-3.9,0 -3.4,-1.5L-1.2,-1.2Z"/><path transform="translate(314.7,163.4)" d="M-1.5,-3.4Q0,-3.9 1.5,-3.4L1.2,-1.2L3.4,-1.5Q3.9,0 3.4,1.5L1.2,1.2L1.5,3.4Q0,3.9 -1.5,3.4L-1.2,1.2L-3.4,1.5Q-3.9,0 -3.4,-1.5L-1.2,-1.2Z"/><path transform="translate(271.7,202.8)" d="M-1.5,-3.4Q0,-3.9 1.5,-3.4L1.2,-1.2L3.4,-1.5Q3.9,0 3.4,1.5L1.2,1.2L1.5,3.4Q0,3.9 -1.5,3.4L-1.2,1.2L-3.4,1.5Q-3.9,0 -3.4,-1.5L-1.2,-1.2Z"/><path transform="translate(297.5,228.6)" d="M-1.5,-3.4Q0,-3.9 1.5,-3.4L1.2,-1.2L3.4,-1.5Q3.9,0 3.4,1.5L1.2,1.2L1.5,3.4Q0,3.9 -1.5,3.4L-1.2,1.2L-3.4,1.5Q-3.9,0 -3.4,-1.5L-1.2,-1.2Z"/><path transform="translate(241.4,236)" d="M-1.5,-3.4Q0,-3.9 1.5,-3.4L1.2,-1.2L3.4,-1.5Q3.9,0 3.4,1.5L1.2,1.2L1.5,3.4Q0,3.9 -1.5,3.4L-1.2,1.2L-3.4,1.5Q-3.9,0 -3.4,-1.5L-1.2,-1.2Z"/><path transform="translate(219.4,232.6)" d="M-1.5,-3.4Q0,-3.9 1.5,-3.4L1.2,-1.2L3.4,-1.5Q3.9,0 3.4,1.5L1.2,1.2L1.5,3.4Q0,3.9 -1.5,3.4L-1.2,1.2L-3.4,1.5Q-3.9,0 -3.4,-1.5L-1.2,-1.2Z"/><path transform="translate(218.6,237.7)" d="M-1.5,-3.4Q0,-3.9 1.5,-3.4L1.2,-1.2L3.4,-1.5Q3.9,0 3.4,1.5L1.2,1.2L1.5,3.4Q0,3.9 -1.5,3.4L-1.2,1.2L-3.4,1.5Q-3.9,0 -3.4,-1.5L-1.2,-1.2Z"/><path transform="translate(213.5,240.2)" d="M-1.5,-3.4Q0,-3.9 1.5,-3.4L1.2,-1.2L3.4,-1.5Q3.9,0 3.4,1.5L1.2,1.2L1.5,3.4Q0,3.9 -1.5,3.4L-1.2,1.2L-3.4,1.5Q-3.9,0 -3.4,-1.5L-1.2,-1.2Z"/><path transform="translate(215.2,247.8)" d="M-1.5,-3.4Q0,-3.9 1.5,-3.4L1.2,-1.2L3.4,-1.5Q3.9,0 3.4,1.5L1.2,1.2L1.5,3.4Q0,3.9 -1.5,3.4L-1.2,1.2L-3.4,1.5Q-3.9,0 -3.4,-1.5L-1.2,-1.2Z"/><path transform="translate(208.5,258.4)" d="M-1.5,-3.4Q0,-3.9 1.5,-3.4L1.2,-1.2L3.4,-1.5Q3.9,0 3.4,1.5L1.2,1.2L1.5,3.4Q0,3.9 -1.5,3.4L-1.2,1.2L-3.4,1.5Q-3.9,0 -3.4,-1.5L-1.2,-1.2Z"/><path transform="translate(223.7,265.2)" d="M-1.5,-3.4Q0,-3.9 1.5,-3.4L1.2,-1.2L3.4,-1.5Q3.9,0 3.4,1.5L1.2,1.2L1.5,3.4Q0,3.9 -1.5,3.4L-1.2,1.2L-3.4,1.5Q-3.9,0 -3.4,-1.5L-1.2,-1.2Z"/><path transform="translate(259,270.6)" d="M-1.5,-3.4Q0,-3.9 1.5,-3.4L1.2,-1.2L3.4,-1.5Q3.9,0 3.4,1.5L1.2,1.2L1.5,3.4Q0,3.9 -1.5,3.4L-1.2,1.2L-3.4,1.5Q-3.9,0 -3.4,-1.5L-1.2,-1.2Z"/><path transform="translate(263.3,275.6)" d="M-1.5,-3.4Q0,-3.9 1.5,-3.4L1.2,-1.2L3.4,-1.5Q3.9,0 3.4,1.5L1.2,1.2L1.5,3.4Q0,3.9 -1.5,3.4L-1.2,1.2L-3.4,1.5Q-3.9,0 -3.4,-1.5L-1.2,-1.2Z"/><path transform="translate(240.2,275.6)" d="M-1.5,-3.4Q0,-3.9 1.5,-3.4L1.2,-1.2L3.4,-1.5Q3.9,0 3.4,1.5L1.2,1.2L1.5,3.4Q0,3.9 -1.5,3.4L-1.2,1.2L-3.4,1.5Q-3.9,0 -3.4,-1.5L-1.2,-1.2Z"/><path transform="translate(236.3,284)" d="M-1.5,-3.4Q0,-3.9 1.5,-3.4L1.2,-1.2L3.4,-1.5Q3.9,0 3.4,1.5L1.2,1.2L1.5,3.4Q0,3.9 -1.5,3.4L-1.2,1.2L-3.4,1.5Q-3.9,0 -3.4,-1.5L-1.2,-1.2Z"/><path transform="translate(213.9,279.8)" d="M-1.5,-3.4Q0,-3.9 1.5,-3.4L1.2,-1.2L3.4,-1.5Q3.9,0 3.4,1.5L1.2,1.2L1.5,3.4Q0,3.9 -1.5,3.4L-1.2,1.2L-3.4,1.5Q-3.9,0 -3.4,-1.5L-1.2,-1.2Z"/><path transform="translate(224,289.1)" d="M-1.5,-3.4Q0,-3.9 1.5,-3.4L1.2,-1.2L3.4,-1.5Q3.9,0 3.4,1.5L1.2,1.2L1.5,3.4Q0,3.9 -1.5,3.4L-1.2,1.2L-3.4,1.5Q-3.9,0 -3.4,-1.5L-1.2,-1.2Z"/><path transform="translate(229.6,292.5)" d="M-1.5,-3.4Q0,-3.9 1.5,-3.4L1.2,-1.2L3.4,-1.5Q3.9,0 3.4,1.5L1.2,1.2L1.5,3.4Q0,3.9 -1.5,3.4L-1.2,1.2L-3.4,1.5Q-3.9,0 -3.4,-1.5L-1.2,-1.2Z"/><path transform="translate(239.7,295.8)" d="M-1.5,-3.4Q0,-3.9 1.5,-3.4L1.2,-1.2L3.4,-1.5Q3.9,0 3.4,1.5L1.2,1.2L1.5,3.4Q0,3.9 -1.5,3.4L-1.2,1.2L-3.4,1.5Q-3.9,0 -3.4,-1.5L-1.2,-1.2Z"/><path transform="translate(237.1,301.7)" d="M-1.5,-3.4Q0,-3.9 1.5,-3.4L1.2,-1.2L3.4,-1.5Q3.9,0 3.4,1.5L1.2,1.2L1.5,3.4Q0,3.9 -1.5,3.4L-1.2,1.2L-3.4,1.5Q-3.9,0 -3.4,-1.5L-1.2,-1.2Z"/><path transform="translate(237.1,308.5)" d="M-1.5,-3.4Q0,-3.9 1.5,-3.4L1.2,-1.2L3.4,-1.5Q3.9,0 3.4,1.5L1.2,1.2L1.5,3.4Q0,3.9 -1.5,3.4L-1.2,1.2L-3.4,1.5Q-3.9,0 -3.4,-1.5L-1.2,-1.2Z"/><path transform="translate(254,305.1)" d="M-1.5,-3.4Q0,-3.9 1.5,-3.4L1.2,-1.2L3.4,-1.5Q3.9,0 3.4,1.5L1.2,1.2L1.5,3.4Q0,3.9 -1.5,3.4L-1.2,1.2L-3.4,1.5Q-3.9,0 -3.4,-1.5L-1.2,-1.2Z"/><path transform="translate(250.6,310.2)" d="M-1.5,-3.4Q0,-3.9 1.5,-3.4L1.2,-1.2L3.4,-1.5Q3.9,0 3.4,1.5L1.2,1.2L1.5,3.4Q0,3.9 -1.5,3.4L-1.2,1.2L-3.4,1.5Q-3.9,0 -3.4,-1.5L-1.2,-1.2Z"/><path transform="translate(280.1,307.6)" d="M-1.5,-3.4Q0,-3.9 1.5,-3.4L1.2,-1.2L3.4,-1.5Q3.9,0 3.4,1.5L1.2,1.2L1.5,3.4Q0,3.9 -1.5,3.4L-1.2,1.2L-3.4,1.5Q-3.9,0 -3.4,-1.5L-1.2,-1.2Z"/><path transform="translate(269.2,317.4)" d="M-1.5,-3.4Q0,-3.9 1.5,-3.4L1.2,-1.2L3.4,-1.5Q3.9,0 3.4,1.5L1.2,1.2L1.5,3.4Q0,3.9 -1.5,3.4L-1.2,1.2L-3.4,1.5Q-3.9,0 -3.4,-1.5L-1.2,-1.2Z"/><path transform="translate(333.2,300.2)" d="M-1.5,-3.4Q0,-3.9 1.5,-3.4L1.2,-1.2L3.4,-1.5Q3.9,0 3.4,1.5L1.2,1.2L1.5,3.4Q0,3.9 -1.5,3.4L-1.2,1.2L-3.4,1.5Q-3.9,0 -3.4,-1.5L-1.2,-1.2Z"/><path transform="translate(291.4,324.8)" d="M-1.5,-3.4Q0,-3.9 1.5,-3.4L1.2,-1.2L3.4,-1.5Q3.9,0 3.4,1.5L1.2,1.2L1.5,3.4Q0,3.9 -1.5,3.4L-1.2,1.2L-3.4,1.5Q-3.9,0 -3.4,-1.5L-1.2,-1.2Z"/><path transform="translate(334.5,323.1)" d="M-1.5,-3.4Q0,-3.9 1.5,-3.4L1.2,-1.2L3.4,-1.5Q3.9,0 3.4,1.5L1.2,1.2L1.5,3.4Q0,3.9 -1.5,3.4L-1.2,1.2L-3.4,1.5Q-3.9,0 -3.4,-1.5L-1.2,-1.2Z"/><path transform="translate(296.4,371.1)" d="M-1.5,-3.4Q0,-3.9 1.5,-3.4L1.2,-1.2L3.4,-1.5Q3.9,0 3.4,1.5L1.2,1.2L1.5,3.4Q0,3.9 -1.5,3.4L-1.2,1.2L-3.4,1.5Q-3.9,0 -3.4,-1.5L-1.2,-1.2Z"/><path transform="translate(313.8,377.2)" d="M-1.5,-3.4Q0,-3.9 1.5,-3.4L1.2,-1.2L3.4,-1.5Q3.9,0 3.4,1.5L1.2,1.2L1.5,3.4Q0,3.9 -1.5,3.4L-1.2,1.2L-3.4,1.5Q-3.9,0 -3.4,-1.5L-1.2,-1.2Z"/><path transform="translate(317.1,378.4)" d="M-1.5,-3.4Q0,-3.9 1.5,-3.4L1.2,-1.2L3.4,-1.5Q3.9,0 3.4,1.5L1.2,1.2L1.5,3.4Q0,3.9 -1.5,3.4L-1.2,1.2L-3.4,1.5Q-3.9,0 -3.4,-1.5L-1.2,-1.2Z"/><path transform="translate(247.2,362.4)" d="M-1.5,-3.4Q0,-3.9 1.5,-3.4L1.2,-1.2L3.4,-1.5Q3.9,0 3.4,1.5L1.2,1.2L1.5,3.4Q0,3.9 -1.5,3.4L-1.2,1.2L-3.4,1.5Q-3.9,0 -3.4,-1.5L-1.2,-1.2Z"/><path transform="translate(385.3,161.1)" d="M-1.5,-3.4Q0,-3.9 1.5,-3.4L1.2,-1.2L3.4,-1.5Q3.9,0 3.4,1.5L1.2,1.2L1.5,3.4Q0,3.9 -1.5,3.4L-1.2,1.2L-3.4,1.5Q-3.9,0 -3.4,-1.5L-1.2,-1.2Z"/><path transform="translate(369.6,205.4)" d="M-1.5,-3.4Q0,-3.9 1.5,-3.4L1.2,-1.2L3.4,-1.5Q3.9,0 3.4,1.5L1.2,1.2L1.5,3.4Q0,3.9 -1.5,3.4L-1.2,1.2L-3.4,1.5Q-3.9,0 -3.4,-1.5L-1.2,-1.2Z"/><path transform="translate(353.3,235.7)" d="M-1.5,-3.4Q0,-3.9 1.5,-3.4L1.2,-1.2L3.4,-1.5Q3.9,0 3.4,1.5L1.2,1.2L1.5,3.4Q0,3.9 -1.5,3.4L-1.2,1.2L-3.4,1.5Q-3.9,0 -3.4,-1.5L-1.2,-1.2Z"/><path transform="translate(423.5,239)" d="M-1.5,-3.4Q0,-3.9 1.5,-3.4L1.2,-1.2L3.4,-1.5Q3.9,0 3.4,1.5L1.2,1.2L1.5,3.4Q0,3.9 -1.5,3.4L-1.2,1.2L-3.4,1.5Q-3.9,0 -3.4,-1.5L-1.2,-1.2Z"/><path transform="translate(524.3,216.4)" d="M-1.5,-3.4Q0,-3.9 1.5,-3.4L1.2,-1.2L3.4,-1.5Q3.9,0 3.4,1.5L1.2,1.2L1.5,3.4Q0,3.9 -1.5,3.4L-1.2,1.2L-3.4,1.5Q-3.9,0 -3.4,-1.5L-1.2,-1.2Z"/><path transform="translate(486.4,224.3)" d="M-1.5,-3.4Q0,-3.9 1.5,-3.4L1.2,-1.2L3.4,-1.5Q3.9,0 3.4,1.5L1.2,1.2L1.5,3.4Q0,3.9 -1.5,3.4L-1.2,1.2L-3.4,1.5Q-3.9,0 -3.4,-1.5L-1.2,-1.2Z"/><path transform="translate(501.2,240.5)" d="M-1.5,-3.4Q0,-3.9 1.5,-3.4L1.2,-1.2L3.4,-1.5Q3.9,0 3.4,1.5L1.2,1.2L1.5,3.4Q0,3.9 -1.5,3.4L-1.2,1.2L-3.4,1.5Q-3.9,0 -3.4,-1.5L-1.2,-1.2Z"/><path transform="translate(518.9,247.2)" d="M-1.5,-3.4Q0,-3.9 1.5,-3.4L1.2,-1.2L3.4,-1.5Q3.9,0 3.4,1.5L1.2,1.2L1.5,3.4Q0,3.9 -1.5,3.4L-1.2,1.2L-3.4,1.5Q-3.9,0 -3.4,-1.5L-1.2,-1.2Z"/><path transform="translate(497.8,260.6)" d="M-1.5,-3.4Q0,-3.9 1.5,-3.4L1.2,-1.2L3.4,-1.5Q3.9,0 3.4,1.5L1.2,1.2L1.5,3.4Q0,3.9 -1.5,3.4L-1.2,1.2L-3.4,1.5Q-3.9,0 -3.4,-1.5L-1.2,-1.2Z"/><path transform="translate(473.5,265.3)" d="M-1.5,-3.4Q0,-3.9 1.5,-3.4L1.2,-1.2L3.4,-1.5Q3.9,0 3.4,1.5L1.2,1.2L1.5,3.4Q0,3.9 -1.5,3.4L-1.2,1.2L-3.4,1.5Q-3.9,0 -3.4,-1.5L-1.2,-1.2Z"/><path transform="translate(443,264.5)" d="M-1.5,-3.4Q0,-3.9 1.5,-3.4L1.2,-1.2L3.4,-1.5Q3.9,0 3.4,1.5L1.2,1.2L1.5,3.4Q0,3.9 -1.5,3.4L-1.2,1.2L-3.4,1.5Q-3.9,0 -3.4,-1.5L-1.2,-1.2Z"/><path transform="translate(574,233.7)" d="M-1.5,-3.4Q0,-3.9 1.5,-3.4L1.2,-1.2L3.4,-1.5Q3.9,0 3.4,1.5L1.2,1.2L1.5,3.4Q0,3.9 -1.5,3.4L-1.2,1.2L-3.4,1.5Q-3.9,0 -3.4,-1.5L-1.2,-1.2Z"/><path transform="translate(576.2,247.2)" d="M-1.5,-3.4Q0,-3.9 1.5,-3.4L1.2,-1.2L3.4,-1.5Q3.9,0 3.4,1.5L1.2,1.2L1.5,3.4Q0,3.9 -1.5,3.4L-1.2,1.2L-3.4,1.5Q-3.9,0 -3.4,-1.5L-1.2,-1.2Z"/><path transform="translate(580.7,246.7)" d="M-1.5,-3.4Q0,-3.9 1.5,-3.4L1.2,-1.2L3.4,-1.5Q3.9,0 3.4,1.5L1.2,1.2L1.5,3.4Q0,3.9 -1.5,3.4L-1.2,1.2L-3.4,1.5Q-3.9,0 -3.4,-1.5L-1.2,-1.2Z"/><path transform="translate(577.4,253.4)" d="M-1.5,-3.4Q0,-3.9 1.5,-3.4L1.2,-1.2L3.4,-1.5Q3.9,0 3.4,1.5L1.2,1.2L1.5,3.4Q0,3.9 -1.5,3.4L-1.2,1.2L-3.4,1.5Q-3.9,0 -3.4,-1.5L-1.2,-1.2Z"/><path transform="translate(582.4,252.6)" d="M-1.5,-3.4Q0,-3.9 1.5,-3.4L1.2,-1.2L3.4,-1.5Q3.9,0 3.4,1.5L1.2,1.2L1.5,3.4Q0,3.9 -1.5,3.4L-1.2,1.2L-3.4,1.5Q-3.9,0 -3.4,-1.5L-1.2,-1.2Z"/><path transform="translate(587.5,230.7)" d="M-1.5,-3.4Q0,-3.9 1.5,-3.4L1.2,-1.2L3.4,-1.5Q3.9,0 3.4,1.5L1.2,1.2L1.5,3.4Q0,3.9 -1.5,3.4L-1.2,1.2L-3.4,1.5Q-3.9,0 -3.4,-1.5L-1.2,-1.2Z"/><path transform="translate(587.5,242.5)" d="M-1.5,-3.4Q0,-3.9 1.5,-3.4L1.2,-1.2L3.4,-1.5Q3.9,0 3.4,1.5L1.2,1.2L1.5,3.4Q0,3.9 -1.5,3.4L-1.2,1.2L-3.4,1.5Q-3.9,0 -3.4,-1.5L-1.2,-1.2Z"/><path transform="translate(584.1,264.4)" d="M-1.5,-3.4Q0,-3.9 1.5,-3.4L1.2,-1.2L3.4,-1.5Q3.9,0 3.4,1.5L1.2,1.2L1.5,3.4Q0,3.9 -1.5,3.4L-1.2,1.2L-3.4,1.5Q-3.9,0 -3.4,-1.5L-1.2,-1.2Z"/><path transform="translate(589.2,198.7)" d="M-1.5,-3.4Q0,-3.9 1.5,-3.4L1.2,-1.2L3.4,-1.5Q3.9,0 3.4,1.5L1.2,1.2L1.5,3.4Q0,3.9 -1.5,3.4L-1.2,1.2L-3.4,1.5Q-3.9,0 -3.4,-1.5L-1.2,-1.2Z"/><path transform="translate(618.1,182.8)" d="M-1.5,-3.4Q0,-3.9 1.5,-3.4L1.2,-1.2L3.4,-1.5Q3.9,0 3.4,1.5L1.2,1.2L1.5,3.4Q0,3.9 -1.5,3.4L-1.2,1.2L-3.4,1.5Q-3.9,0 -3.4,-1.5L-1.2,-1.2Z"/><path transform="translate(615.1,193)" d="M-1.5,-3.4Q0,-3.9 1.5,-3.4L1.2,-1.2L3.4,-1.5Q3.9,0 3.4,1.5L1.2,1.2L1.5,3.4Q0,3.9 -1.5,3.4L-1.2,1.2L-3.4,1.5Q-3.9,0 -3.4,-1.5L-1.2,-1.2Z"/><path transform="translate(591.7,198.8)" d="M-1.5,-3.4Q0,-3.9 1.5,-3.4L1.2,-1.2L3.4,-1.5Q3.9,0 3.4,1.5L1.2,1.2L1.5,3.4Q0,3.9 -1.5,3.4L-1.2,1.2L-3.4,1.5Q-3.9,0 -3.4,-1.5L-1.2,-1.2Z"/><path transform="translate(603.6,205.4)" d="M-1.5,-3.4Q0,-3.9 1.5,-3.4L1.2,-1.2L3.4,-1.5Q3.9,0 3.4,1.5L1.2,1.2L1.5,3.4Q0,3.9 -1.5,3.4L-1.2,1.2L-3.4,1.5Q-3.9,0 -3.4,-1.5L-1.2,-1.2Z"/><path transform="translate(608.8,212.8)" d="M-1.5,-3.4Q0,-3.9 1.5,-3.4L1.2,-1.2L3.4,-1.5Q3.9,0 3.4,1.5L1.2,1.2L1.5,3.4Q0,3.9 -1.5,3.4L-1.2,1.2L-3.4,1.5Q-3.9,0 -3.4,-1.5L-1.2,-1.2Z"/><path transform="translate(614.8,210.3)" d="M-1.5,-3.4Q0,-3.9 1.5,-3.4L1.2,-1.2L3.4,-1.5Q3.9,0 3.4,1.5L1.2,1.2L1.5,3.4Q0,3.9 -1.5,3.4L-1.2,1.2L-3.4,1.5Q-3.9,0 -3.4,-1.5L-1.2,-1.2Z"/><path transform="translate(611.8,200.4)" d="M-1.5,-3.4Q0,-3.9 1.5,-3.4L1.2,-1.2L3.4,-1.5Q3.9,0 3.4,1.5L1.2,1.2L1.5,3.4Q0,3.9 -1.5,3.4L-1.2,1.2L-3.4,1.5Q-3.9,0 -3.4,-1.5L-1.2,-1.2Z"/><path transform="translate(593.7,232.2)" d="M-1.5,-3.4Q0,-3.9 1.5,-3.4L1.2,-1.2L3.4,-1.5Q3.9,0 3.4,1.5L1.2,1.2L1.5,3.4Q0,3.9 -1.5,3.4L-1.2,1.2L-3.4,1.5Q-3.9,0 -3.4,-1.5L-1.2,-1.2Z"/><path transform="translate(596.5,229.2)" d="M-1.5,-3.4Q0,-3.9 1.5,-3.4L1.2,-1.2L3.4,-1.5Q3.9,0 3.4,1.5L1.2,1.2L1.5,3.4Q0,3.9 -1.5,3.4L-1.2,1.2L-3.4,1.5Q-3.9,0 -3.4,-1.5L-1.2,-1.2Z"/><path transform="translate(588.3,230.5)" d="M-1.5,-3.4Q0,-3.9 1.5,-3.4L1.2,-1.2L3.4,-1.5Q3.9,0 3.4,1.5L1.2,1.2L1.5,3.4Q0,3.9 -1.5,3.4L-1.2,1.2L-3.4,1.5Q-3.9,0 -3.4,-1.5L-1.2,-1.2Z"/><path transform="translate(588.5,242.7)" d="M-1.5,-3.4Q0,-3.9 1.5,-3.4L1.2,-1.2L3.4,-1.5Q3.9,0 3.4,1.5L1.2,1.2L1.5,3.4Q0,3.9 -1.5,3.4L-1.2,1.2L-3.4,1.5Q-3.9,0 -3.4,-1.5L-1.2,-1.2Z"/><path transform="translate(591.6,255.9)" d="M-1.5,-3.4Q0,-3.9 1.5,-3.4L1.2,-1.2L3.4,-1.5Q3.9,0 3.4,1.5L1.2,1.2L1.5,3.4Q0,3.9 -1.5,3.4L-1.2,1.2L-3.4,1.5Q-3.9,0 -3.4,-1.5L-1.2,-1.2Z"/><path transform="translate(588.8,267)" d="M-1.5,-3.4Q0,-3.9 1.5,-3.4L1.2,-1.2L3.4,-1.5Q3.9,0 3.4,1.5L1.2,1.2L1.5,3.4Q0,3.9 -1.5,3.4L-1.2,1.2L-3.4,1.5Q-3.9,0 -3.4,-1.5L-1.2,-1.2Z"/><path transform="translate(586.6,270.1)" d="M-1.5,-3.4Q0,-3.9 1.5,-3.4L1.2,-1.2L3.4,-1.5Q3.9,0 3.4,1.5L1.2,1.2L1.5,3.4Q0,3.9 -1.5,3.4L-1.2,1.2L-3.4,1.5Q-3.9,0 -3.4,-1.5L-1.2,-1.2Z"/><path transform="translate(475.4,299.6)" d="M-1.5,-3.4Q0,-3.9 1.5,-3.4L1.2,-1.2L3.4,-1.5Q3.9,0 3.4,1.5L1.2,1.2L1.5,3.4Q0,3.9 -1.5,3.4L-1.2,1.2L-3.4,1.5Q-3.9,0 -3.4,-1.5L-1.2,-1.2Z"/><path transform="translate(456,304.7)" d="M-1.5,-3.4Q0,-3.9 1.5,-3.4L1.2,-1.2L3.4,-1.5Q3.9,0 3.4,1.5L1.2,1.2L1.5,3.4Q0,3.9 -1.5,3.4L-1.2,1.2L-3.4,1.5Q-3.9,0 -3.4,-1.5L-1.2,-1.2Z"/><path transform="translate(507.4,297.9)" d="M-1.5,-3.4Q0,-3.9 1.5,-3.4L1.2,-1.2L3.4,-1.5Q3.9,0 3.4,1.5L1.2,1.2L1.5,3.4Q0,3.9 -1.5,3.4L-1.2,1.2L-3.4,1.5Q-3.9,0 -3.4,-1.5L-1.2,-1.2Z"/><path transform="translate(522.6,310.2)" d="M-1.5,-3.4Q0,-3.9 1.5,-3.4L1.2,-1.2L3.4,-1.5Q3.9,0 3.4,1.5L1.2,1.2L1.5,3.4Q0,3.9 -1.5,3.4L-1.2,1.2L-3.4,1.5Q-3.9,0 -3.4,-1.5L-1.2,-1.2Z"/><path transform="translate(488.9,316.5)" d="M-1.5,-3.4Q0,-3.9 1.5,-3.4L1.2,-1.2L3.4,-1.5Q3.9,0 3.4,1.5L1.2,1.2L1.5,3.4Q0,3.9 -1.5,3.4L-1.2,1.2L-3.4,1.5Q-3.9,0 -3.4,-1.5L-1.2,-1.2Z"/><path transform="translate(488.5,328.3)" d="M-1.5,-3.4Q0,-3.9 1.5,-3.4L1.2,-1.2L3.4,-1.5Q3.9,0 3.4,1.5L1.2,1.2L1.5,3.4Q0,3.9 -1.5,3.4L-1.2,1.2L-3.4,1.5Q-3.9,0 -3.4,-1.5L-1.2,-1.2Z"/><path transform="translate(508.3,328.3)" d="M-1.5,-3.4Q0,-3.9 1.5,-3.4L1.2,-1.2L3.4,-1.5Q3.9,0 3.4,1.5L1.2,1.2L1.5,3.4Q0,3.9 -1.5,3.4L-1.2,1.2L-3.4,1.5Q-3.9,0 -3.4,-1.5L-1.2,-1.2Z"/><path transform="translate(532.4,322.7)" d="M-1.5,-3.4Q0,-3.9 1.5,-3.4L1.2,-1.2L3.4,-1.5Q3.9,0 3.4,1.5L1.2,1.2L1.5,3.4Q0,3.9 -1.5,3.4L-1.2,1.2L-3.4,1.5Q-3.9,0 -3.4,-1.5L-1.2,-1.2Z"/><path transform="translate(538.1,339.6)" d="M-1.5,-3.4Q0,-3.9 1.5,-3.4L1.2,-1.2L3.4,-1.5Q3.9,0 3.4,1.5L1.2,1.2L1.5,3.4Q0,3.9 -1.5,3.4L-1.2,1.2L-3.4,1.5Q-3.9,0 -3.4,-1.5L-1.2,-1.2Z"/><path transform="translate(486.4,351)" d="M-1.5,-3.4Q0,-3.9 1.5,-3.4L1.2,-1.2L3.4,-1.5Q3.9,0 3.4,1.5L1.2,1.2L1.5,3.4Q0,3.9 -1.5,3.4L-1.2,1.2L-3.4,1.5Q-3.9,0 -3.4,-1.5L-1.2,-1.2Z"/><path transform="translate(490.6,351.4)" d="M-1.5,-3.4Q0,-3.9 1.5,-3.4L1.2,-1.2L3.4,-1.5Q3.9,0 3.4,1.5L1.2,1.2L1.5,3.4Q0,3.9 -1.5,3.4L-1.2,1.2L-3.4,1.5Q-3.9,0 -3.4,-1.5L-1.2,-1.2Z"/><path transform="translate(502,350.2)" d="M-1.5,-3.4Q0,-3.9 1.5,-3.4L1.2,-1.2L3.4,-1.5Q3.9,0 3.4,1.5L1.2,1.2L1.5,3.4Q0,3.9 -1.5,3.4L-1.2,1.2L-3.4,1.5Q-3.9,0 -3.4,-1.5L-1.2,-1.2Z"/><path transform="translate(508.3,349)" d="M-1.5,-3.4Q0,-3.9 1.5,-3.4L1.2,-1.2L3.4,-1.5Q3.9,0 3.4,1.5L1.2,1.2L1.5,3.4Q0,3.9 -1.5,3.4L-1.2,1.2L-3.4,1.5Q-3.9,0 -3.4,-1.5L-1.2,-1.2Z"/><path transform="translate(517.2,351)" d="M-1.5,-3.4Q0,-3.9 1.5,-3.4L1.2,-1.2L3.4,-1.5Q3.9,0 3.4,1.5L1.2,1.2L1.5,3.4Q0,3.9 -1.5,3.4L-1.2,1.2L-3.4,1.5Q-3.9,0 -3.4,-1.5L-1.2,-1.2Z"/><path transform="translate(477.9,356.4)" d="M-1.5,-3.4Q0,-3.9 1.5,-3.4L1.2,-1.2L3.4,-1.5Q3.9,0 3.4,1.5L1.2,1.2L1.5,3.4Q0,3.9 -1.5,3.4L-1.2,1.2L-3.4,1.5Q-3.9,0 -3.4,-1.5L-1.2,-1.2Z"/><path transform="translate(443.7,330.8)" d="M-1.5,-3.4Q0,-3.9 1.5,-3.4L1.2,-1.2L3.4,-1.5Q3.9,0 3.4,1.5L1.2,1.2L1.5,3.4Q0,3.9 -1.5,3.4L-1.2,1.2L-3.4,1.5Q-3.9,0 -3.4,-1.5L-1.2,-1.2Z"/><path transform="translate(576.5,286.6)" d="M-1.5,-3.4Q0,-3.9 1.5,-3.4L1.2,-1.2L3.4,-1.5Q3.9,0 3.4,1.5L1.2,1.2L1.5,3.4Q0,3.9 -1.5,3.4L-1.2,1.2L-3.4,1.5Q-3.9,0 -3.4,-1.5L-1.2,-1.2Z"/><path transform="translate(567.8,290)" d="M-1.5,-3.4Q0,-3.9 1.5,-3.4L1.2,-1.2L3.4,-1.5Q3.9,0 3.4,1.5L1.2,1.2L1.5,3.4Q0,3.9 -1.5,3.4L-1.2,1.2L-3.4,1.5Q-3.9,0 -3.4,-1.5L-1.2,-1.2Z"/><path transform="translate(578.5,300.5)" d="M-1.5,-3.4Q0,-3.9 1.5,-3.4L1.2,-1.2L3.4,-1.5Q3.9,0 3.4,1.5L1.2,1.2L1.5,3.4Q0,3.9 -1.5,3.4L-1.2,1.2L-3.4,1.5Q-3.9,0 -3.4,-1.5L-1.2,-1.2Z"/><path transform="translate(557.6,304.7)" d="M-1.5,-3.4Q0,-3.9 1.5,-3.4L1.2,-1.2L3.4,-1.5Q3.9,0 3.4,1.5L1.2,1.2L1.5,3.4Q0,3.9 -1.5,3.4L-1.2,1.2L-3.4,1.5Q-3.9,0 -3.4,-1.5L-1.2,-1.2Z"/><path transform="translate(563.4,314.8)" d="M-1.5,-3.4Q0,-3.9 1.5,-3.4L1.2,-1.2L3.4,-1.5Q3.9,0 3.4,1.5L1.2,1.2L1.5,3.4Q0,3.9 -1.5,3.4L-1.2,1.2L-3.4,1.5Q-3.9,0 -3.4,-1.5L-1.2,-1.2Z"/><path transform="translate(558,321.5)" d="M-1.5,-3.4Q0,-3.9 1.5,-3.4L1.2,-1.2L3.4,-1.5Q3.9,0 3.4,1.5L1.2,1.2L1.5,3.4Q0,3.9 -1.5,3.4L-1.2,1.2L-3.4,1.5Q-3.9,0 -3.4,-1.5L-1.2,-1.2Z"/><path transform="translate(552.9,338.9)" d="M-1.5,-3.4Q0,-3.9 1.5,-3.4L1.2,-1.2L3.4,-1.5Q3.9,0 3.4,1.5L1.2,1.2L1.5,3.4Q0,3.9 -1.5,3.4L-1.2,1.2L-3.4,1.5Q-3.9,0 -3.4,-1.5L-1.2,-1.2Z"/><path transform="translate(556,343.4)" d="M-1.5,-3.4Q0,-3.9 1.5,-3.4L1.2,-1.2L3.4,-1.5Q3.9,0 3.4,1.5L1.2,1.2L1.5,3.4Q0,3.9 -1.5,3.4L-1.2,1.2L-3.4,1.5Q-3.9,0 -3.4,-1.5L-1.2,-1.2Z"/><path transform="translate(552.6,346)" d="M-1.5,-3.4Q0,-3.9 1.5,-3.4L1.2,-1.2L3.4,-1.5Q3.9,0 3.4,1.5L1.2,1.2L1.5,3.4Q0,3.9 -1.5,3.4L-1.2,1.2L-3.4,1.5Q-3.9,0 -3.4,-1.5L-1.2,-1.2Z"/><path transform="translate(352.9,251)" d="M-1.5,-3.4Q0,-3.9 1.5,-3.4L1.2,-1.2L3.4,-1.5Q3.9,0 3.4,1.5L1.2,1.2L1.5,3.4Q0,3.9 -1.5,3.4L-1.2,1.2L-3.4,1.5Q-3.9,0 -3.4,-1.5L-1.2,-1.2Z"/><path transform="translate(350.3,257.7)" d="M-1.5,-3.4Q0,-3.9 1.5,-3.4L1.2,-1.2L3.4,-1.5Q3.9,0 3.4,1.5L1.2,1.2L1.5,3.4Q0,3.9 -1.5,3.4L-1.2,1.2L-3.4,1.5Q-3.9,0 -3.4,-1.5L-1.2,-1.2Z"/><path transform="translate(353.7,261.1)" d="M-1.5,-3.4Q0,-3.9 1.5,-3.4L1.2,-1.2L3.4,-1.5Q3.9,0 3.4,1.5L1.2,1.2L1.5,3.4Q0,3.9 -1.5,3.4L-1.2,1.2L-3.4,1.5Q-3.9,0 -3.4,-1.5L-1.2,-1.2Z"/><path transform="translate(412.4,276.2)" d="M-1.5,-3.4Q0,-3.9 1.5,-3.4L1.2,-1.2L3.4,-1.5Q3.9,0 3.4,1.5L1.2,1.2L1.5,3.4Q0,3.9 -1.5,3.4L-1.2,1.2L-3.4,1.5Q-3.9,0 -3.4,-1.5L-1.2,-1.2Z"/><path transform="translate(407.3,290.2)" d="M-1.5,-3.4Q0,-3.9 1.5,-3.4L1.2,-1.2L3.4,-1.5Q3.9,0 3.4,1.5L1.2,1.2L1.5,3.4Q0,3.9 -1.5,3.4L-1.2,1.2L-3.4,1.5Q-3.9,0 -3.4,-1.5L-1.2,-1.2Z"/><path transform="translate(411,299.8)" d="M-1.5,-3.4Q0,-3.9 1.5,-3.4L1.2,-1.2L3.4,-1.5Q3.9,0 3.4,1.5L1.2,1.2L1.5,3.4Q0,3.9 -1.5,3.4L-1.2,1.2L-3.4,1.5Q-3.9,0 -3.4,-1.5L-1.2,-1.2Z"/><path transform="translate(395,307.8)" d="M-1.5,-3.4Q0,-3.9 1.5,-3.4L1.2,-1.2L3.4,-1.5Q3.9,0 3.4,1.5L1.2,1.2L1.5,3.4Q0,3.9 -1.5,3.4L-1.2,1.2L-3.4,1.5Q-3.9,0 -3.4,-1.5L-1.2,-1.2Z"/><path transform="translate(401.4,315)" d="M-1.5,-3.4Q0,-3.9 1.5,-3.4L1.2,-1.2L3.4,-1.5Q3.9,0 3.4,1.5L1.2,1.2L1.5,3.4Q0,3.9 -1.5,3.4L-1.2,1.2L-3.4,1.5Q-3.9,0 -3.4,-1.5L-1.2,-1.2Z"/><path transform="translate(410.2,328)" d="M-1.5,-3.4Q0,-3.9 1.5,-3.4L1.2,-1.2L3.4,-1.5Q3.9,0 3.4,1.5L1.2,1.2L1.5,3.4Q0,3.9 -1.5,3.4L-1.2,1.2L-3.4,1.5Q-3.9,0 -3.4,-1.5L-1.2,-1.2Z"/><path transform="translate(388.8,331.4)" d="M-1.5,-3.4Q0,-3.9 1.5,-3.4L1.2,-1.2L3.4,-1.5Q3.9,0 3.4,1.5L1.2,1.2L1.5,3.4Q0,3.9 -1.5,3.4L-1.2,1.2L-3.4,1.5Q-3.9,0 -3.4,-1.5L-1.2,-1.2Z"/><path transform="translate(455.7,304.4)" d="M-1.5,-3.4Q0,-3.9 1.5,-3.4L1.2,-1.2L3.4,-1.5Q3.9,0 3.4,1.5L1.2,1.2L1.5,3.4Q0,3.9 -1.5,3.4L-1.2,1.2L-3.4,1.5Q-3.9,0 -3.4,-1.5L-1.2,-1.2Z"/><path transform="translate(360.1,308.8)" d="M-1.5,-3.4Q0,-3.9 1.5,-3.4L1.2,-1.2L3.4,-1.5Q3.9,0 3.4,1.5L1.2,1.2L1.5,3.4Q0,3.9 -1.5,3.4L-1.2,1.2L-3.4,1.5Q-3.9,0 -3.4,-1.5L-1.2,-1.2Z"/><path transform="translate(383.4,341.5)" d="M-1.5,-3.4Q0,-3.9 1.5,-3.4L1.2,-1.2L3.4,-1.5Q3.9,0 3.4,1.5L1.2,1.2L1.5,3.4Q0,3.9 -1.5,3.4L-1.2,1.2L-3.4,1.5Q-3.9,0 -3.4,-1.5L-1.2,-1.2Z"/><path transform="translate(378.9,363.4)" d="M-1.5,-3.4Q0,-3.9 1.5,-3.4L1.2,-1.2L3.4,-1.5Q3.9,0 3.4,1.5L1.2,1.2L1.5,3.4Q0,3.9 -1.5,3.4L-1.2,1.2L-3.4,1.5Q-3.9,0 -3.4,-1.5L-1.2,-1.2Z"/><path transform="translate(400.3,364.6)" d="M-1.5,-3.4Q0,-3.9 1.5,-3.4L1.2,-1.2L3.4,-1.5Q3.9,0 3.4,1.5L1.2,1.2L1.5,3.4Q0,3.9 -1.5,3.4L-1.2,1.2L-3.4,1.5Q-3.9,0 -3.4,-1.5L-1.2,-1.2Z"/><path transform="translate(402.8,362)" d="M-1.5,-3.4Q0,-3.9 1.5,-3.4L1.2,-1.2L3.4,-1.5Q3.9,0 3.4,1.5L1.2,1.2L1.5,3.4Q0,3.9 -1.5,3.4L-1.2,1.2L-3.4,1.5Q-3.9,0 -3.4,-1.5L-1.2,-1.2Z"/><path transform="translate(412.1,380.2)" d="M-1.5,-3.4Q0,-3.9 1.5,-3.4L1.2,-1.2L3.4,-1.5Q3.9,0 3.4,1.5L1.2,1.2L1.5,3.4Q0,3.9 -1.5,3.4L-1.2,1.2L-3.4,1.5Q-3.9,0 -3.4,-1.5L-1.2,-1.2Z"/><path transform="translate(407,384.3)" d="M-1.5,-3.4Q0,-3.9 1.5,-3.4L1.2,-1.2L3.4,-1.5Q3.9,0 3.4,1.5L1.2,1.2L1.5,3.4Q0,3.9 -1.5,3.4L-1.2,1.2L-3.4,1.5Q-3.9,0 -3.4,-1.5L-1.2,-1.2Z"/><path transform="translate(560.1,361.7)" d="M-1.5,-3.4Q0,-3.9 1.5,-3.4L1.2,-1.2L3.4,-1.5Q3.9,0 3.4,1.5L1.2,1.2L1.5,3.4Q0,3.9 -1.5,3.4L-1.2,1.2L-3.4,1.5Q-3.9,0 -3.4,-1.5L-1.2,-1.2Z"/><path transform="translate(565.8,364.6)" d="M-1.5,-3.4Q0,-3.9 1.5,-3.4L1.2,-1.2L3.4,-1.5Q3.9,0 3.4,1.5L1.2,1.2L1.5,3.4Q0,3.9 -1.5,3.4L-1.2,1.2L-3.4,1.5Q-3.9,0 -3.4,-1.5L-1.2,-1.2Z"/><path transform="translate(549,371.3)" d="M-1.5,-3.4Q0,-3.9 1.5,-3.4L1.2,-1.2L3.4,-1.5Q3.9,0 3.4,1.5L1.2,1.2L1.5,3.4Q0,3.9 -1.5,3.4L-1.2,1.2L-3.4,1.5Q-3.9,0 -3.4,-1.5L-1.2,-1.2Z"/><path transform="translate(573.6,379.7)" d="M-1.5,-3.4Q0,-3.9 1.5,-3.4L1.2,-1.2L3.4,-1.5Q3.9,0 3.4,1.5L1.2,1.2L1.5,3.4Q0,3.9 -1.5,3.4L-1.2,1.2L-3.4,1.5Q-3.9,0 -3.4,-1.5L-1.2,-1.2Z"/><path transform="translate(561.8,404.2)" d="M-1.5,-3.4Q0,-3.9 1.5,-3.4L1.2,-1.2L3.4,-1.5Q3.9,0 3.4,1.5L1.2,1.2L1.5,3.4Q0,3.9 -1.5,3.4L-1.2,1.2L-3.4,1.5Q-3.9,0 -3.4,-1.5L-1.2,-1.2Z"/></g><circle cx="235.5" cy="148.9" r="14.3" fill="rgb(205,50,50)" fill-opacity="0.8" stroke="#e8e8e8" stroke-opacity="0.7" stroke-width="0.8"/><circle cx="221.7" cy="170.8" r="3.3" fill="rgb(205,50,50)" fill-opacity="0.8" stroke="#e8e8e8" stroke-opacity="0.7" stroke-width="0.5"/><circle cx="279.7" cy="154.8" r="2.8" fill="rgb(205,50,50)" fill-opacity="0.8" stroke="#e8e8e8" stroke-opacity="0.7" stroke-width="0.5"/><circle cx="318.4" cy="174.7" r="2" fill="rgb(205,50,50)" fill-opacity="0.8" stroke="#e8e8e8" stroke-opacity="0.7" stroke-width="0.5"/><circle cx="224.8" cy="233.8" r="2" fill="rgb(205,50,50)" fill-opacity="0.8" stroke="#e8e8e8" stroke-opacity="0.7" stroke-width="0.5"/><circle cx="218.9" cy="248.3" r="1.5" fill="rgb(205,50,50)" fill-opacity="0.8" stroke="#e8e8e8" stroke-opacity="0.7" stroke-width="0.5"/><circle cx="240.2" cy="279.8" r="3.3" fill="rgb(205,50,50)" fill-opacity="0.8" stroke="#e8e8e8" stroke-opacity="0.7" stroke-width="0.5"/><circle cx="234.3" cy="293.7" r="2.2" fill="rgb(205,50,50)" fill-opacity="0.8" stroke="#e8e8e8" stroke-opacity="0.7" stroke-width="0.5"/><circle cx="209.3" cy="251.2" r="1.4" fill="rgb(205,50,50)" fill-opacity="0.8" stroke="#e8e8e8" stroke-opacity="0.7" stroke-width="0.5"/><circle cx="299.5" cy="236" r="1.2" fill="rgb(205,50,50)" fill-opacity="0.8" stroke="#e8e8e8" stroke-opacity="0.7" stroke-width="0.5"/><circle cx="244.7" cy="373.7" r="9.4" fill="rgb(205,50,50)" fill-opacity="0.8" stroke="#e8e8e8" stroke-opacity="0.7" stroke-width="0.8"/><circle cx="401.1" cy="176.7" r="17.6" fill="rgb(205,50,50)" fill-opacity="0.8" stroke="#e8e8e8" stroke-opacity="0.7" stroke-width="0.8"/><circle cx="444.3" cy="193.9" r="1.5" fill="rgb(205,50,50)" fill-opacity="0.8" stroke="#e8e8e8" stroke-opacity="0.7" stroke-width="0.5"/><circle cx="476.3" cy="210" r="1.8" fill="rgb(205,50,50)" fill-opacity="0.8" stroke="#e8e8e8" stroke-opacity="0.7" stroke-width="0.5"/><circle cx="464.5" cy="236.9" r="1.8" fill="rgb(205,50,50)" fill-opacity="0.8" stroke="#e8e8e8" stroke-opacity="0.7" stroke-width="0.5"/><circle cx="427.4" cy="231.9" r="1.3" fill="rgb(205,50,50)" fill-opacity="0.8" stroke="#e8e8e8" stroke-opacity="0.7" stroke-width="0.5"/><circle cx="575.6" cy="200.4" r="4.1" fill="rgb(205,50,50)" fill-opacity="0.8" stroke="#e8e8e8" stroke-opacity="0.7" stroke-width="0.5"/><circle cx="545.3" cy="225.6" r="3.5" fill="rgb(205,50,50)" fill-opacity="0.8" stroke="#e8e8e8" stroke-opacity="0.7" stroke-width="0.5"/><circle cx="499" cy="248.4" r="2.5" fill="rgb(205,50,50)" fill-opacity="0.8" stroke="#e8e8e8" stroke-opacity="0.7" stroke-width="0.5"/><circle cx="464.4" cy="237.4" r="1.6" fill="rgb(205,50,50)" fill-opacity="0.8" stroke="#e8e8e8" stroke-opacity="0.7" stroke-width="0.5"/><circle cx="476.2" cy="210.1" r="1.4" fill="rgb(205,50,50)" fill-opacity="0.8" stroke="#e8e8e8" stroke-opacity="0.7" stroke-width="0.5"/><circle cx="501.2" cy="229" r="1.2" fill="rgb(205,50,50)" fill-opacity="0.8" stroke="#e8e8e8" stroke-opacity="0.7" stroke-width="0.5"/><circle cx="504" cy="213" r="1" fill="rgb(205,50,50)" fill-opacity="0.8" stroke="#e8e8e8" stroke-opacity="0.7" stroke-width="0.5"/><circle cx="550.4" cy="237.9" r="1.3" fill="rgb(205,50,50)" fill-opacity="0.8" stroke="#e8e8e8" stroke-opacity="0.7" stroke-width="0.5"/><circle cx="582.9" cy="227" r="1.8" fill="rgb(205,50,50)" fill-opacity="0.8" stroke="#e8e8e8" stroke-opacity="0.7" stroke-width="0.5"/><circle cx="570.8" cy="261.2" r="1" fill="rgb(205,50,50)" fill-opacity="0.8" stroke="#e8e8e8" stroke-opacity="0.7" stroke-width="0.5"/><circle cx="529" cy="245" r="1" fill="rgb(205,50,50)" fill-opacity="0.8" stroke="#e8e8e8" stroke-opacity="0.7" stroke-width="0.5"/><circle cx="516.7" cy="253.4" r="1.2" fill="rgb(205,50,50)" fill-opacity="0.8" stroke="#e8e8e8" stroke-opacity="0.7" stroke-width="0.5"/><circle cx="504.6" cy="269.6" r="1.2" fill="rgb(205,50,50)" fill-opacity="0.8" stroke="#e8e8e8" stroke-opacity="0.7" stroke-width="0.5"/><circle cx="610.7" cy="195" r="4.1" fill="rgb(205,50,50)" fill-opacity="0.8" stroke="#e8e8e8" stroke-opacity="0.7" stroke-width="0.5"/><circle cx="592.6" cy="223.8" r="2.3" fill="rgb(205,50,50)" fill-opacity="0.8" stroke="#e8e8e8" stroke-opacity="0.7" stroke-width="0.5"/><circle cx="582.7" cy="227.1" r="1.5" fill="rgb(205,50,50)" fill-opacity="0.8" stroke="#e8e8e8" stroke-opacity="0.7" stroke-width="0.5"/><circle cx="603.1" cy="219.3" r="1.2" fill="rgb(205,50,50)" fill-opacity="0.8" stroke="#e8e8e8" stroke-opacity="0.7" stroke-width="0.5"/><circle cx="497.8" cy="293.7" r="3.3" fill="rgb(205,50,50)" fill-opacity="0.8" stroke="#e8e8e8" stroke-opacity="0.7" stroke-width="0.5"/><circle cx="531" cy="286.6" r="2.3" fill="rgb(205,50,50)" fill-opacity="0.8" stroke="#e8e8e8" stroke-opacity="0.7" stroke-width="0.5"/><circle cx="580.2" cy="295.7" r="3.5" fill="rgb(205,50,50)" fill-opacity="0.8" stroke="#e8e8e8" stroke-opacity="0.7" stroke-width="0.5"/><circle cx="503.7" cy="344.3" r="3.2" fill="rgb(205,50,50)" fill-opacity="0.8" stroke="#e8e8e8" stroke-opacity="0.7" stroke-width="0.5"/><circle cx="548.3" cy="358.1" r="3.2" fill="rgb(205,50,50)" fill-opacity="0.8" stroke="#e8e8e8" stroke-opacity="0.7" stroke-width="0.5"/><circle cx="460.2" cy="303.3" r="1.5" fill="rgb(205,50,50)" fill-opacity="0.8" stroke="#e8e8e8" stroke-opacity="0.7" stroke-width="0.5"/><circle cx="555" cy="277.2" r="1" fill="rgb(205,50,50)" fill-opacity="0.8" stroke="#e8e8e8" stroke-opacity="0.7" stroke-width="0.5"/><circle cx="471.2" cy="346.8" r="1" fill="rgb(205,50,50)" fill-opacity="0.8" stroke="#e8e8e8" stroke-opacity="0.7" stroke-width="0.5"/><circle cx="373.6" cy="323.9" r="5.3" fill="rgb(205,50,50)" fill-opacity="0.8" stroke="#e8e8e8" stroke-opacity="0.7" stroke-width="0.8"/><circle cx="419.4" cy="293.6" r="2" fill="rgb(205,50,50)" fill-opacity="0.8" stroke="#e8e8e8" stroke-opacity="0.7" stroke-width="0.5"/><circle cx="459.9" cy="303.2" r="1.5" fill="rgb(205,50,50)" fill-opacity="0.8" stroke="#e8e8e8" stroke-opacity="0.7" stroke-width="0.5"/><circle cx="436.3" cy="266.1" r="1.2" fill="rgb(205,50,50)" fill-opacity="0.8" stroke="#e8e8e8" stroke-opacity="0.7" stroke-width="0.5"/><circle cx="429.8" cy="359.5" r="1.2" fill="rgb(205,50,50)" fill-opacity="0.8" stroke="#e8e8e8" stroke-opacity="0.7" stroke-width="0.5"/>
</svg>
</body></html>
